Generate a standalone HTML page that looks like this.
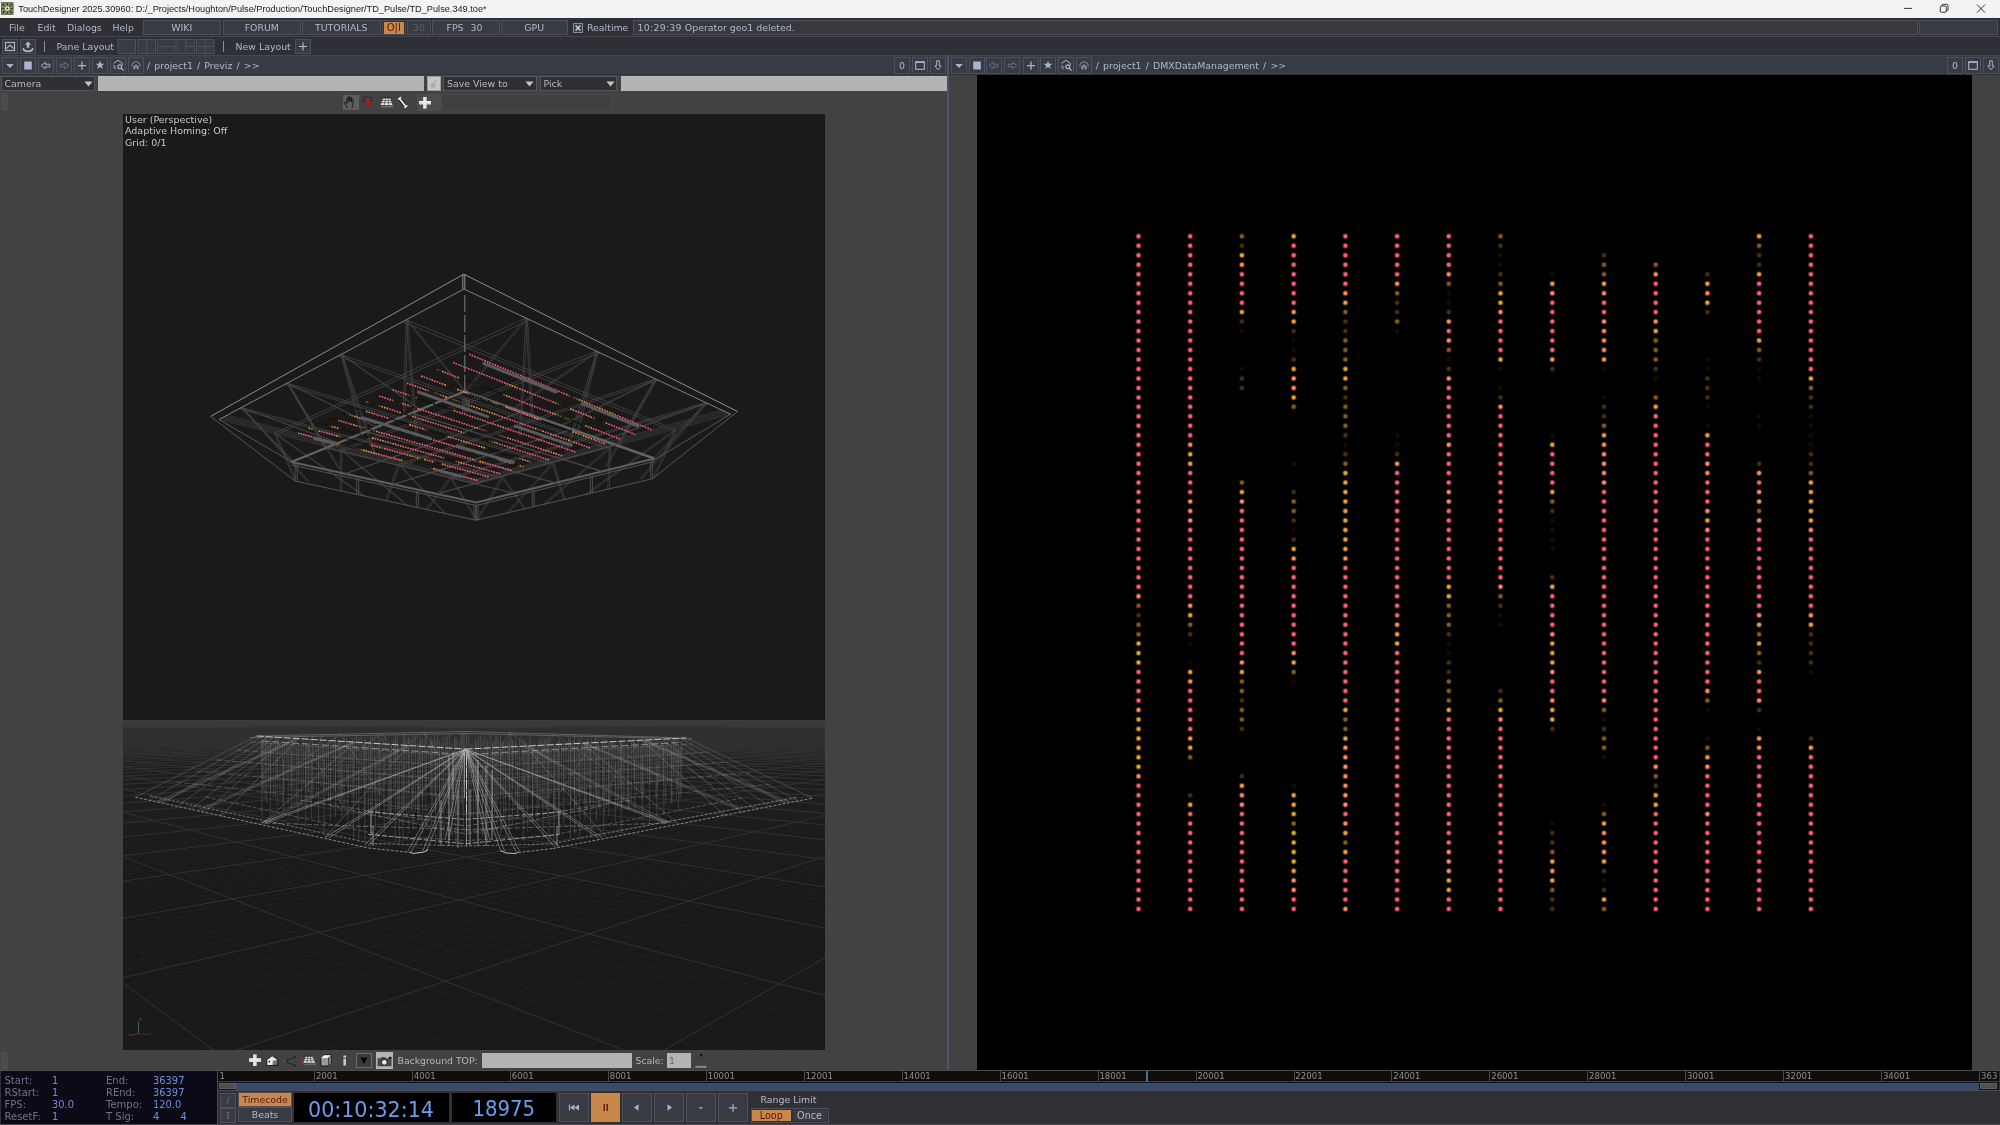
<!DOCTYPE html>
<html><head><meta charset="utf-8"><title>TouchDesigner</title>
<style>
*{box-sizing:border-box;margin:0;padding:0}
html,body{width:2000px;height:1125px;overflow:hidden;background:#424242}
body{position:relative;will-change:transform;font-family:"DejaVu Sans","Liberation Sans",sans-serif;font-size:9.4px;color:#b3b8c9}
.a{position:absolute}
.t{position:absolute;white-space:nowrap;line-height:12px;height:12px}
.b{position:absolute;background:#383b44;border:1px solid #4d5058}
.c{text-align:center}
svg{position:absolute;overflow:visible}
#title{left:0;top:0;width:2000px;height:18px;background:#f3f3f3}
#title .t{font-family:"Liberation Sans",sans-serif;font-size:9.200px;color:#1a1a1a;left:18.300px;top:3.300px}
.bar{left:0;width:2000px;height:19px;background:#2e3035;border-bottom:1px solid #44464b}
.path{top:55px;height:20px;background:#383b44;border-top:1px solid #44464b;border-bottom:1px solid #303238}
.pb{position:absolute;top:1px;width:16px;height:17px;background:#383b44;border:1px solid #4d5058}
.dd{position:absolute;top:76px;height:15px;background:#2e3035;border:1px solid #54565c;color:#b8b8b8}
.f{position:absolute;background:#b4b4b4}
.lbl{color:#6d7487}
.val{color:#6e8fd6}
.or{background:#c8874b;color:#5a1410;border-color:#c8874b}
</style></head><body>
<div id="title" class="a"><span class="t">TouchDesigner 2025.30960: D:/_Projects/Houghton/Pulse/Production/TouchDesigner/TD_Pulse/TD_Pulse.349.toe*</span><svg style="left:0;top:0" width="16" height="18" viewBox="0 0 16 18"><rect x="1.500" y="2.700" width="11.600" height="11.600" fill="#7d8d5c" stroke="#3a3f2a" stroke-width="0.700"/><path d="M3.200 4.400l2.600 2.600M11.400 4.400l-2.600 2.600M3.200 12.600l2.600-2.600M11.400 12.600l-2.600-2.600M7.300 3v2.700M7.300 11.300v2.700M1.800 8.500h2.600M10.200 8.500h2.600" stroke="#15150f" stroke-width="0.700"/><path d="M2.700 3.900h1.300v1.300H2.700zM10.600 3.900h1.300v1.300h-1.300zM2.700 11.800h1.300v1.300H2.700zM10.600 11.800h1.300v1.300h-1.300z" fill="#15150f"/><circle cx="7.300" cy="8.500" r="1.700" fill="#333" stroke="#f4f4f4" stroke-width="1.300"/></svg><svg style="left:1900px;top:0" width="100" height="18" viewBox="0 0 100 18" fill="none" stroke="#222" stroke-width="0.9"><path d="M4 8.4h8"/><rect x="40.3" y="6" width="6" height="6.3" rx="1.2"/><path d="M42 6v-0.5a1.2 1.2 0 0 1 1.2-1.2h3.6a1.2 1.2 0 0 1 1.2 1.2v4a1.2 1.2 0 0 1-1.2 1.2h-0.5"/><path d="M77 4.6l8 8M85 4.6l-8 8"/></svg></div>
<div class="a bar" style="top:18px"><span class="t" style="left:9px;top:3.500px">File</span><span class="t" style="left:37.5px;top:3.500px">Edit</span><span class="t" style="left:67px;top:3.500px">Dialogs</span><span class="t" style="left:112.5px;top:3.500px">Help</span><div class="b c" style="left:142.5px;top:2px;width:78.5px;height:15px"><span class="t" style="position:static;line-height:13px">WIKI</span></div><div class="b c" style="left:222.5px;top:2px;width:78.5px;height:15px"><span class="t" style="position:static;line-height:13px">FORUM</span></div><div class="b c" style="left:302px;top:2px;width:78.5px;height:15px"><span class="t" style="position:static;line-height:13px">TUTORIALS</span></div><div class="b" style="left:382px;top:2px;width:23.5px;height:15px;background:#2e3035"><div class="a or c" style="left:0.5px;top:0.5px;width:20.5px;height:12px;line-height:12px;font-size:10px">O|I</div></div><div class="b c" style="left:407px;top:2px;width:24px;height:15px;color:#5d6170;line-height:13px">30</div><div class="b" style="left:432px;top:2px;width:67.5px;height:15px"><span class="t" style="left:13.5px;top:0.5px">FPS</span><span class="t" style="left:37.5px;top:0.5px">30</span></div><div class="b c" style="left:500.5px;top:2px;width:67.5px;height:15px;line-height:13px">GPU</div><div class="a" style="left:573px;top:5px;width:10px;height:10px;border:1px solid #8a8d96;background:#3a3c44"></div><svg style="left:573px;top:5px" width="10" height="10" viewBox="0 0 10 10"><path d="M2.6 2.6l4.8 4.8M7.4 2.6l-4.8 4.8" stroke="#d0d3de" stroke-width="1.4"/></svg><span class="t" style="left:587px;top:3.5px">Realtime</span><div class="b" style="left:633px;top:2px;width:1285px;height:15px;background:#38393e"><span class="t" style="left:3.500px;top:0.500px"><span style="letter-spacing:0.280px">10:29:39</span> Operator geo1 deleted.</span></div><div class="b" style="left:1919px;top:2px;width:79px;height:15px"></div></div>
<div class="a bar" style="top:37px"><div class="b" style="left:2px;top:2px;width:16px;height:15px"></div><svg style="left:2px;top:2px" width="16" height="15" viewBox="0 0 16 15" fill="none" stroke="#b3b8c9" stroke-width="1.1"><rect x="3.5" y="3.5" width="9" height="8"/><path d="M4.5 9.5L8 6l3.5 3.5"/></svg><div class="b" style="left:19.5px;top:2px;width:16px;height:15px"></div><svg style="left:19.5px;top:2px" width="16" height="15" viewBox="0 0 16 15"><path d="M8 2.6l3 3.2H9.2v3H6.800V5.800H5z" fill="#b3b8c9"/><path d="M3 9.300c0.500 2.200 2.600 3 5 3s4.500-0.800 5-3" fill="none" stroke="#b3b8c9" stroke-width="1.6"/></svg><div class="a" style="left:44px;top:4px;width:1px;height:11px;background:#8a8d96"></div><span class="t" style="left:56.5px;top:3.5px">Pane Layout</span><svg style="left:117px;top:2px" width="98" height="15" viewBox="0 0 98 15" fill="#383b44" stroke="#4d5058" stroke-width="1"><rect x="1" y="0.5" width="17.5" height="14"/><rect x="21" y="0.5" width="17.5" height="14"/><path d="M29.700 0.500v14"/><rect x="40.500" y="0.500" width="17.500" height="14"/><path d="M40.500 7.500h17.500"/><rect x="60" y="0.500" width="17.500" height="14"/><path d="M68.700 0.500v14M68.700 7.500h8.800"/><rect x="79.500" y="0.500" width="17.500" height="14"/><path d="M88.200 0.500v14M79.500 7.500h17.500"/></svg><div class="a" style="left:223px;top:4px;width:1px;height:11px;background:#8a8d96"></div><span class="t" style="left:235.5px;top:3.5px">New Layout</span><div class="b" style="left:295px;top:2px;width:16px;height:15px"></div><svg style="left:295px;top:2px" width="16" height="15" viewBox="0 0 16 15"><path d="M8 3.500v8M4 7.500h8" stroke="#b3b8c9" stroke-width="1.2"/></svg></div>
<div class="a path" style="left:0px;width:947px"><div class="pb" style="left:2px"></div><svg style="left:2px;top:1px" width="16" height="17" viewBox="0 0 16 17"><path d="M4.200 7h7.600L8 11z" fill="#a9b3cf"/></svg><div class="pb" style="left:20px"></div><svg style="left:20px;top:1px" width="16" height="17" viewBox="0 0 16 17"><rect x="4.200" y="4.500" width="7.600" height="8" fill="#a9b3cf"/></svg><div class="pb" style="left:38px"></div><svg style="left:38px;top:1px" width="16" height="17" viewBox="0 0 16 17"><path d="M3.200 8.500l4-3.200v1.900h4.600v2.600H7.200v1.900z" fill="none" stroke="#a9b3cf" stroke-width="1"/></svg><div class="pb" style="left:56px"></div><svg style="left:56px;top:1px" width="16" height="17" viewBox="0 0 16 17"><path d="M12.800 8.500l-4-3.200v1.900H4.200v2.600h4.600v1.900z" fill="none" stroke="#6b7287" stroke-width="1"/></svg><div class="pb" style="left:73.5px"></div><svg style="left:73.5px;top:1px" width="16" height="17" viewBox="0 0 16 17"><path d="M8 4.500v8.200M3.900 8.600h8.200" stroke="#a9b3cf" stroke-width="1.300"/></svg><div class="pb" style="left:91.5px"></div><svg style="left:91.5px;top:1px" width="16" height="17" viewBox="0 0 16 17"><path d="M8 3.800l1.250 3h3.100l-2.500 2 0.950 3.100L8 10l-2.800 1.900 0.950-3.100-2.500-2h3.100z" fill="#a9b3cf"/></svg><div class="pb" style="left:109.5px"></div><svg style="left:109.5px;top:1px" width="16" height="17" viewBox="0 0 16 17"><path d="M3.500 6.300L8 3.300l4.300 3M3.300 8.300l2.500 1.800M3.300 10.300l2.500 1.800" fill="none" stroke="#a9b3cf" stroke-width="1"/><path d="M12.300 6.300v2" stroke="#a9b3cf" stroke-width="1"/><circle cx="9.800" cy="9.800" r="1.900" fill="none" stroke="#a9b3cf" stroke-width="1.200"/><path d="M11.200 11.200l2.300 2.300" stroke="#a9b3cf" stroke-width="1.300"/></svg><div class="pb" style="left:127.5px"></div><svg style="left:127.5px;top:1px" width="16" height="17" viewBox="0 0 16 17"><path d="M3.800 9.500c0-3 1.800-4.700 4.200-4.700s4.200 1.700 4.200 4.700" fill="none" stroke="#8a93ad" stroke-width="1"/><path d="M5.300 12.300V9.500L8 7.300l2.700 2.200v2.800z" fill="#8a93ad"/><rect x="7.400" y="9.700" width="1.200" height="2.600" fill="#383b44"/></svg><span class="t" style="left:147.0px;top:3.500px;word-spacing:1.200px">/ project1 / Previz / &gt;&gt;</span><div class="pb" style="left:894px"></div><span class="t c" style="left:894px;width:16px;top:3.5px">0</span><div class="pb" style="left:912px"></div><svg style="left:912px;top:1px" width="16" height="17" viewBox="0 0 16 17"><rect x="3.700" y="5.300" width="8.600" height="7" fill="none" stroke="#a9b3cf" stroke-width="1.100"/><path d="M3.200 5h9.600" stroke="#a9b3cf" stroke-width="1.600"/></svg><div class="pb" style="left:930px"></div><svg style="left:930px;top:1px" width="16" height="17" viewBox="0 0 16 17"><path d="M6.700 3.800h2.600v5h1.900L8 12.800 4.800 8.800h1.900z" fill="none" stroke="#a9b3cf" stroke-width="1"/></svg></div>
<div class="a path" style="left:949.2px;width:1050.8px"><div class="pb" style="left:1.5px"></div><svg style="left:1.5px;top:1px" width="16" height="17" viewBox="0 0 16 17"><path d="M4.200 7h7.600L8 11z" fill="#a9b3cf"/></svg><div class="pb" style="left:19.5px"></div><svg style="left:19.5px;top:1px" width="16" height="17" viewBox="0 0 16 17"><rect x="4.200" y="4.500" width="7.600" height="8" fill="#a9b3cf"/></svg><div class="pb" style="left:37px"></div><svg style="left:37px;top:1px" width="16" height="17" viewBox="0 0 16 17"><path d="M3.200 8.500l4-3.200v1.900h4.600v2.600H7.200v1.900z" fill="none" stroke="#6b7287" stroke-width="1"/></svg><div class="pb" style="left:55px"></div><svg style="left:55px;top:1px" width="16" height="17" viewBox="0 0 16 17"><path d="M12.800 8.500l-4-3.200v1.900H4.200v2.600h4.600v1.900z" fill="none" stroke="#6b7287" stroke-width="1"/></svg><div class="pb" style="left:73.5px"></div><svg style="left:73.5px;top:1px" width="16" height="17" viewBox="0 0 16 17"><path d="M8 4.500v8.200M3.900 8.600h8.200" stroke="#a9b3cf" stroke-width="1.300"/></svg><div class="pb" style="left:91px"></div><svg style="left:91px;top:1px" width="16" height="17" viewBox="0 0 16 17"><path d="M8 3.800l1.250 3h3.100l-2.500 2 0.950 3.100L8 10l-2.800 1.900 0.950-3.100-2.500-2h3.100z" fill="#a9b3cf"/></svg><div class="pb" style="left:109px"></div><svg style="left:109px;top:1px" width="16" height="17" viewBox="0 0 16 17"><path d="M3.500 6.300L8 3.300l4.300 3M3.300 8.300l2.500 1.800M3.300 10.300l2.500 1.800" fill="none" stroke="#a9b3cf" stroke-width="1"/><path d="M12.300 6.300v2" stroke="#a9b3cf" stroke-width="1"/><circle cx="9.800" cy="9.800" r="1.900" fill="none" stroke="#a9b3cf" stroke-width="1.200"/><path d="M11.200 11.200l2.300 2.300" stroke="#a9b3cf" stroke-width="1.300"/></svg><div class="pb" style="left:127px"></div><svg style="left:127px;top:1px" width="16" height="17" viewBox="0 0 16 17"><path d="M3.800 9.500c0-3 1.800-4.700 4.200-4.700s4.200 1.700 4.200 4.700" fill="none" stroke="#8a93ad" stroke-width="1"/><path d="M5.300 12.300V9.500L8 7.300l2.700 2.200v2.800z" fill="#8a93ad"/><rect x="7.400" y="9.700" width="1.200" height="2.600" fill="#383b44"/></svg><span class="t" style="left:146.5px;top:3.500px;word-spacing:1.200px">/ project1 / DMXDataManagement / &gt;&gt;</span><div class="pb" style="left:997.8px"></div><span class="t c" style="left:997.8px;width:16px;top:3.5px">0</span><div class="pb" style="left:1015.8px"></div><svg style="left:1015.8px;top:1px" width="16" height="17" viewBox="0 0 16 17"><rect x="3.700" y="5.300" width="8.600" height="7" fill="none" stroke="#a9b3cf" stroke-width="1.100"/><path d="M3.200 5h9.600" stroke="#a9b3cf" stroke-width="1.600"/></svg><div class="pb" style="left:1033.8px"></div><svg style="left:1033.8px;top:1px" width="16" height="17" viewBox="0 0 16 17"><path d="M6.700 3.800h2.600v5h1.900L8 12.800 4.800 8.800h1.900z" fill="none" stroke="#a9b3cf" stroke-width="1"/></svg></div>
<div class="a" style="left:947.300px;top:55px;width:1.800px;height:1015px;background:#4f5170"></div>
<div class="dd" style="left:0.500px;width:94.500px"><span class="t" style="left:3px;top:0.500px">Camera</span><svg style="left:82px;top:4px" width="9" height="6" viewBox="0 0 9 6"><path d="M0.500 0.500h8L4.500 5.500z" fill="#c4c4c4"/></svg></div><div class="f" style="left:98px;top:76px;width:326px;height:15px"></div><div class="a" style="left:426.500px;top:76px;width:14.500px;height:15px;background:#c6c6c6;border:1px solid #9a9a9a"></div><svg style="left:427px;top:76px" width="14" height="15" viewBox="0 0 14 15"><circle cx="6" cy="9.300" r="2.500" fill="#aaa"/><path d="M7 6.500a1.800 1.800 0 0 1 3.300-0.500" fill="none" stroke="#aaa" stroke-width="1.200"/></svg><div class="dd" style="left:443px;width:93.500px"><span class="t" style="left:3px;top:0.500px">Save View to</span><svg style="left:81px;top:4px" width="9" height="6" viewBox="0 0 9 6"><path d="M0.500 0.500h8L4.500 5.500z" fill="#c4c4c4"/></svg></div><div class="dd" style="left:539.5px;width:77.500px"><span class="t" style="left:3px;top:0.500px">Pick</span><svg style="left:65.500px;top:4px" width="9" height="6" viewBox="0 0 9 6"><path d="M0.500 0.500h8L4.500 5.500z" fill="#c4c4c4"/></svg></div><div class="f" style="left:621px;top:76px;width:326px;height:15px"></div><div class="a" style="left:0.500px;top:93px;width:7.500px;height:18px;background:#4c4c4c"></div><div class="a" style="left:0.500px;top:1051.500px;width:7.500px;height:18px;background:#4c4c4c"></div><div class="a" style="left:343px;top:94.700px;width:16px;height:15.600px;background:#5e5e5e"></div><div class="a" style="left:417px;top:93.500px;width:24px;height:17.500px;background:#4c4c4c"></div><div class="a" style="left:441px;top:93.500px;width:172px;height:17.500px;background:#404040;border:1px solid #484848"></div><svg style="left:338px;top:90px" width="110" height="24" viewBox="338 90 110 24" fill="none"><path d="M346.800 103.500c-0.800-1.200-1.600-1.700-2.200-1.200s0.300 1.600 1 2.800l1.900 3.200M346.800 104v-5.200c0-1.100 1.500-1.100 1.500 0v3.500M348.300 101.500v-4.200c0-1.100 1.600-1.100 1.600 0v4.300M349.900 101.500v-3.600c0-1.100 1.600-1.100 1.600 0v4M351.500 102v-2.300c0-1 1.500-1 1.500 0v4.300c0 2-0.600 3.200-1.300 4.600" stroke="#161616" stroke-width="0.900"/><path d="M363.300 97.200h8.600v4.400h-8.600z" stroke="#1c1c1c" stroke-width="0.900" stroke-dasharray="1.700 1.100"/><path d="M366.500 98.600l4.200 3.600-1.700 0.500 1.700 4.200-1.100 0.400-1.600-4.200-1.500 1.200z" fill="#f00000"/><path d="M381 105.600h12.500v1.900h-12.500z" fill="#6a6a6a"/><path d="M383.300 98.200h6.800l2.400 6.700h-11.800z" fill="#e8e8e8"/><path d="M382.400 100.500h8.600M381.600 102.700h10.200M385.500 98.200l-1.300 6.700M387.900 98.200l0.900 6.700" stroke="#333" stroke-width="0.600"/><path d="M383 97.900h7.200" stroke="#222" stroke-width="0.800"/><path d="M379.500 99.500v6h6" stroke="#f00000" stroke-width="1.100"/><path d="M399.600 98.600l6.200 8" stroke="#161616" stroke-width="3.400" stroke-linecap="round"/><path d="M399.600 98.600l6.200 8" stroke="#e4e4e4" stroke-width="1.800" stroke-linecap="round"/><circle cx="399" cy="98.900" r="1.100" fill="#e4e4e4"/><circle cx="400.300" cy="97.800" r="1.100" fill="#e4e4e4"/><circle cx="405.200" cy="107.300" r="1.100" fill="#e4e4e4"/><circle cx="406.500" cy="106.200" r="1.100" fill="#e4e4e4"/><path d="M423.400 97h3.300v4.100h4.300v3.300h-4.300v4.100h-3.300v-4.100h-4.300v-3.300h4.300z" fill="#dcdcdc"/><path d="M423.400 97h1.200v11.500h-1.200zM419.100 101.100h11.900v1.100h-11.900z" fill="#f4f4f4"/></svg>
<div class="a" style="left:123px;top:114px;width:702px;height:936px;background:#1a1a1a;overflow:hidden"><svg style="left:0;top:0" width="702" height="936" viewBox="123 114 702 936" fill="none" stroke-linecap="butt"><defs><linearGradient id="hz" x1="0" y1="0" x2="0" y2="1"><stop offset="0" stop-color="#3c3c3c"/><stop offset="0.055" stop-color="#383838"/><stop offset="0.1" stop-color="#2f2f2f"/><stop offset="0.2" stop-color="#272727"/><stop offset="0.4" stop-color="#202020"/><stop offset="0.7" stop-color="#1b1b1b"/><stop offset="1" stop-color="#191919"/></linearGradient></defs><rect x="123" y="720" width="702" height="110" fill="url(#hz)"/><rect x="123" y="830" width="702" height="220" fill="#191919"/><path d="M123 727.5h22M154 727.5h38M199 727.5h24M233 727.5h14M255 727.5h28M294 727.5h11M311 727.5h11M334 727.5h30M366 727.5h39M419 727.5h29M458 727.5h13M473 727.5h25M501 727.5h14M519 727.5h9M536 727.5h22M570 727.5h25M605 727.5h24M638 727.5h23M666 727.5h40M720 727.5h35M766 727.5h18M789 727.5h17M809 727.5h33M123 729.5h35M165 729.5h39M216 729.5h8M228 729.5h37M273 729.5h39M319 729.5h10M339 729.5h33M377 729.5h11M394 729.5h39M444 729.5h12M460 729.5h11M474 729.5h34M512 729.5h26M545 729.5h14M570 729.5h12M592 729.5h12M611 729.5h15M631 729.5h39M682 729.5h18M712 729.5h15M734 729.5h35M779 729.5h11M804 729.5h15M824 729.5h33M123 731.6h17M143 731.6h11M163 731.6h16M188 731.6h20M216 731.6h39M262 731.6h26M301 731.6h14M319 731.6h37M367 731.6h16M388 731.6h32M433 731.6h14M460 731.6h36M506 731.6h21M531 731.6h9M553 731.6h16M579 731.6h16M608 731.6h27M640 731.6h14M664 731.6h10M679 731.6h26M717 731.6h28M750 731.6h37M792 731.6h9M806 731.6h22M123 733.9h14M143 733.9h26M173 733.9h20M205 733.9h39M254 733.9h30M294 733.9h12M309 733.9h9M330 733.9h30M374 733.9h9M392 733.9h23M427 733.9h18M459 733.9h10M478 733.9h32M522 733.9h32M564 733.9h33M610 733.9h19M640 733.9h37M689 733.9h21M722 733.9h36M767 733.9h28M801 733.9h27M123 736.4h11M143 736.4h40M196 736.4h31M234 736.4h32M274 736.4h22M308 736.4h11M330 736.4h9M348 736.4h23M376 736.4h30M415 736.4h28M455 736.4h16M474 736.4h18M501 736.4h14M520 736.4h37M567 736.4h22M602 736.4h18M630 736.4h14M652 736.4h34M698 736.4h36M741 736.4h27M774 736.4h12M794 736.4h35M123 739.0h31M167 739.0h17M188 739.0h22M216 739.0h15M238 739.0h28M274 739.0h18M304 739.0h39M351 739.0h10M363 739.0h36M402 739.0h31M441 739.0h18M471 739.0h9M483 739.0h23M508 739.0h35M547 739.0h13M562 739.0h28M598 739.0h28M636 739.0h34M683 739.0h30M717 739.0h23M745 739.0h8M761 739.0h31M796 739.0h17M819 739.0h30M123 741.8h28M162 741.8h21M194 741.8h37M234 741.8h38M282 741.8h12M302 741.8h28M343 741.8h20M372 741.8h36M420 741.8h38M465 741.8h29M499 741.8h31M542 741.8h29M581 741.8h15M608 741.8h39M661 741.8h25M698 741.8h18M729 741.8h35M771 741.8h11M789 741.8h26M123 744.8h24M149 744.8h34M186 744.8h34M223 744.8h19M253 744.8h12M270 744.8h25M305 744.8h35M350 744.8h38M396 744.8h38M438 744.8h15M461 744.8h17M489 744.8h28M526 744.8h35M570 744.8h18M594 744.8h35M642 744.8h15M669 744.8h39M716 744.8h26M747 744.8h25M780 744.8h27M810 744.8h39M123 748.0h21M155 748.0h26M189 748.0h30M222 748.0h25M254 748.0h39M306 748.0h17M330 748.0h12M350 748.0h34M397 748.0h23M426 748.0h14M449 748.0h38M490 748.0h33M526 748.0h14M545 748.0h30M580 748.0h19M609 748.0h11M631 748.0h12M651 748.0h16M672 748.0h25M704 748.0h20M731 748.0h25M760 748.0h15M784 748.0h28M821 748.0h35M123 751.5h35M163 751.5h32M207 751.5h37M249 751.5h18M280 751.5h15M309 751.5h36M349 751.5h16M376 751.5h16M395 751.5h35M437 751.5h33M474 751.5h21M505 751.5h9M518 751.5h30M561 751.5h39M603 751.5h24M638 751.5h24M673 751.5h14M689 751.5h11M703 751.5h26M737 751.5h26M767 751.5h14M785 751.5h35M123 755.1h38M164 755.1h10M187 755.1h23M221 755.1h18M247 755.1h24M279 755.1h27M308 755.1h30M351 755.1h14M372 755.1h32M411 755.1h14M429 755.1h24M455 755.1h37M504 755.1h31M546 755.1h28M581 755.1h27M617 755.1h39M668 755.1h16M697 755.1h32M740 755.1h34M781 755.1h37M123 759.1h30M164 759.1h32M204 759.1h31M238 759.1h19M264 759.1h8M279 759.1h28M317 759.1h15M346 759.1h29M381 759.1h29M419 759.1h25M451 759.1h40M500 759.1h30M542 759.1h39M584 759.1h28M622 759.1h16M645 759.1h10M659 759.1h20M682 759.1h16M711 759.1h26M745 759.1h39M793 759.1h40M123 763.3h34M160 763.3h27M198 763.3h9M221 763.3h13M241 763.3h13M263 763.3h28M293 763.3h38M338 763.3h25M372 763.3h20M398 763.3h29M435 763.3h17M463 763.3h17M483 763.3h16M501 763.3h13M525 763.3h20M558 763.3h32M593 763.3h40M646 763.3h10M669 763.3h22M698 763.3h39M742 763.3h25M780 763.3h31M819 763.3h39M123 767.8h27M154 767.8h28M189 767.8h15M206 767.8h25M235 767.8h22M267 767.8h23M295 767.8h27M328 767.8h33M370 767.8h40M423 767.8h31M459 767.8h12M484 767.8h33M526 767.8h19M551 767.8h30M590 767.8h27M626 767.8h32M663 767.8h16M692 767.8h37M742 767.8h9M754 767.8h17M778 767.8h28M809 767.8h25M123 772.6h11M144 772.6h26M179 772.6h20M207 772.6h15M228 772.6h32M272 772.6h10M285 772.6h34M329 772.6h33M366 772.6h22M393 772.6h34M433 772.6h29M476 772.6h18M503 772.6h32M548 772.6h22M576 772.6h11M599 772.6h11M613 772.6h26M647 772.6h30M682 772.6h33M718 772.6h15M743 772.6h11M759 772.6h31M801 772.6h17M821 772.6h19M123 777.8h20M146 777.8h31M186 777.8h37M236 777.8h37M281 777.8h34M320 777.8h18M345 777.8h38M396 777.8h16M418 777.8h20M444 777.8h21M471 777.8h14M494 777.8h34M536 777.8h35M580 777.8h14M605 777.8h36M646 777.8h9M663 777.8h25M697 777.8h39M746 777.8h34M783 777.8h25M820 777.8h11M123 783.3h32M167 783.3h11M188 783.3h13M211 783.3h29M245 783.3h15M271 783.3h25M307 783.3h21M334 783.3h39M383 783.3h24M415 783.3h31M457 783.3h37M501 783.3h34M545 783.3h35M592 783.3h35M640 783.3h39M688 783.3h25M723 783.3h34M764 783.3h21M789 783.3h32M123 789.2h20M147 789.2h15M169 789.2h17M200 789.2h10M215 789.2h12M237 789.2h33M274 789.2h10M291 789.2h27M331 789.2h9M343 789.2h14M362 789.2h16M388 789.2h27M420 789.2h14M439 789.2h14M464 789.2h18M490 789.2h34M532 789.2h16M561 789.2h37M604 789.2h26M643 789.2h23M671 789.2h10M694 789.2h34M735 789.2h25M768 789.2h17M798 789.2h29M123 795.5h8M139 795.5h20M170 795.5h31M211 795.5h13M227 795.5h18M251 795.5h36M295 795.5h28M337 795.5h17M362 795.5h13M386 795.5h8M406 795.5h35M453 795.5h11M469 795.5h31M503 795.5h23M534 795.5h39M582 795.5h35M623 795.5h33M663 795.5h37M703 795.5h34M742 795.5h25M776 795.5h13M801 795.5h18M825 795.5h10" stroke="#363636" stroke-opacity="0.55" stroke-width="1"/><path d="M789.6 1052.0L827.0 1024.3M746.6 1052.0L827.0 997.8M703.6 1052.0L827.0 975.4M617.7 1052.0L827.0 940.1M574.7 1052.0L827.0 925.8M531.8 1052.0L827.0 913.3M488.8 1052.0L827.0 902.2M445.8 1052.0L827.0 892.3M402.9 1052.0L827.0 883.5M359.9 1052.0L827.0 875.5M316.9 1052.0L827.0 868.2M274.0 1052.0L827.0 861.6M188.0 1052.0L827.0 850.0M145.0 1052.0L827.0 844.9M121.0 1046.5L827.0 840.2M121.0 1034.6L827.0 835.8M121.0 1023.5L827.0 831.7M121.0 1013.2L827.0 827.9M121.0 1003.6L827.0 824.3M121.0 994.5L827.0 821.0M121.0 986.1L827.0 817.9M121.0 970.6L827.0 812.2M121.0 963.6L827.0 809.6M121.0 956.9L827.0 807.1M121.0 950.5L827.0 804.8M121.0 944.5L827.0 802.6M121.0 938.8L827.0 800.5M121.0 933.4L827.0 798.5M121.0 928.3L827.0 796.6M121.0 923.4L827.0 794.8M121.0 914.2L827.0 791.4M121.0 909.9L827.0 789.8M121.0 905.8L827.0 788.3M121.0 901.9L827.0 786.9M121.0 898.1L827.0 785.5M121.0 894.5L827.0 784.2M121.0 891.1L827.0 782.9M121.0 887.7L827.0 781.7M121.0 884.5L827.0 780.5M121.0 878.5L827.0 778.2M121.0 875.6L827.0 777.2M121.0 872.9L827.0 776.2M121.0 870.2L827.0 775.2M121.0 867.6L827.0 774.2M121.0 865.1L827.0 773.3M121.0 862.7L827.0 772.4M121.0 860.4L827.0 771.6M121.0 858.2L827.0 770.8M121.0 853.9L827.0 769.2M121.0 851.8L827.0 768.4M121.0 849.8L827.0 767.7M121.0 847.9L827.0 767.0M121.0 846.0L827.0 766.3M121.0 844.2L827.0 765.6M121.0 842.4L827.0 765.0M121.0 840.7L827.0 764.3M121.0 839.1L827.0 763.7M121.0 835.8L827.0 762.5M121.0 834.3L827.0 762.0M121.0 832.8L827.0 761.4M121.0 831.4L827.0 760.9M121.0 829.9L827.0 760.3M121.0 828.5L827.0 759.8M121.0 827.2L827.0 759.3M121.0 825.9L827.0 758.9M121.0 824.6L827.0 758.4M121.0 822.1L827.0 757.5M121.0 820.9L827.0 757.0M121.0 819.7L827.0 756.6M121.0 818.6L827.0 756.2M121.0 817.5L827.0 755.8M121.0 816.4L827.0 755.4M121.0 815.3L827.0 755.0M121.0 814.3L827.0 754.6M121.0 813.2L827.0 754.2M121.0 811.3L827.0 753.5M121.0 810.3L827.0 753.1M121.0 809.4L827.0 752.8M121.0 808.4L827.0 752.4M121.0 807.5L827.0 752.1M121.0 806.7L827.0 751.8M121.0 805.8L827.0 751.5M121.0 804.9L827.0 751.1M121.0 804.1L827.0 750.8M121.0 802.5L827.0 750.2M121.0 801.7L827.0 749.9M121.0 800.9L827.0 749.7M121.0 800.2L827.0 749.4M121.0 799.4L827.0 749.1M121.0 798.7L827.0 748.8M121.0 798.0L827.0 748.6M121.0 797.3L827.0 748.3M121.0 796.6L827.0 748.1M121.0 795.3L827.0 747.6M121.0 794.6L827.0 747.3M121.0 794.0L827.0 747.1M121.0 793.3L827.0 746.9M121.0 792.7L827.0 746.6M121.0 792.1L827.0 746.4M121.0 791.5L827.0 746.2M121.0 790.9L827.0 746.0M121.0 790.3L827.0 745.8M133.4 1052.0L121.0 1040.8M174.6 1052.0L121.0 1008.2M257.2 1052.0L121.0 959.5M298.5 1052.0L121.0 940.9M339.7 1052.0L121.0 924.9M381.0 1052.0L121.0 911.1M422.3 1052.0L121.0 899.0M463.6 1052.0L121.0 888.4M504.8 1052.0L121.0 878.9M546.1 1052.0L121.0 870.5M587.4 1052.0L121.0 862.9M669.9 1052.0L121.0 849.8M711.2 1052.0L121.0 844.1M752.5 1052.0L121.0 838.9M793.8 1052.0L121.0 834.1M827.0 1049.5L121.0 829.7M827.0 1037.2L121.0 825.6M827.0 1025.8L121.0 821.8M827.0 1015.2L121.0 818.2M827.0 1005.3L121.0 814.9M827.0 987.4L121.0 809.0M827.0 979.2L121.0 806.2M827.0 971.6L121.0 803.7M827.0 964.3L121.0 801.3M827.0 957.5L121.0 799.0M827.0 951.1L121.0 796.9M827.0 945.0L121.0 794.8M827.0 939.2L121.0 792.9M827.0 933.7L121.0 791.0M827.0 923.4L121.0 787.6M827.0 918.7L121.0 786.1M827.0 914.1L121.0 784.5M827.0 909.8L121.0 783.1M827.0 905.7L121.0 781.7M827.0 901.7L121.0 780.4M827.0 897.9L121.0 779.1M827.0 894.2L121.0 777.9M827.0 890.7L121.0 776.7M827.0 884.1L121.0 774.5M827.0 881.0L121.0 773.5M827.0 878.0L121.0 772.5M827.0 875.2L121.0 771.5M827.0 872.4L121.0 770.6M827.0 869.7L121.0 769.7M827.0 867.1L121.0 768.9M827.0 864.6L121.0 768.0M827.0 862.2L121.0 767.2M827.0 857.6L121.0 765.7M827.0 855.4L121.0 765.0M827.0 853.2L121.0 764.2M827.0 851.2L121.0 763.6M827.0 849.2L121.0 762.9M827.0 847.3L121.0 762.2M827.0 845.4L121.0 761.6M827.0 843.6L121.0 761.0M827.0 841.8L121.0 760.4M827.0 838.4L121.0 759.3M827.0 836.8L121.0 758.7M827.0 835.2L121.0 758.2M827.0 833.6L121.0 757.7M827.0 832.1L121.0 757.2M827.0 830.7L121.0 756.7M827.0 829.2L121.0 756.2M827.0 827.8L121.0 755.8M827.0 826.5L121.0 755.3M827.0 823.9L121.0 754.5M827.0 822.6L121.0 754.0M827.0 821.4L121.0 753.6M827.0 820.2L121.0 753.2M827.0 819.0L121.0 752.8M827.0 817.9L121.0 752.5M827.0 816.8L121.0 752.1M827.0 815.7L121.0 751.7M827.0 814.6L121.0 751.4M827.0 812.5L121.0 750.7M827.0 811.5L121.0 750.3M827.0 810.6L121.0 750.0M827.0 809.6L121.0 749.7M827.0 808.7L121.0 749.4M827.0 807.8L121.0 749.1M827.0 806.9L121.0 748.8M827.0 806.0L121.0 748.5M827.0 805.1L121.0 748.2M827.0 803.4L121.0 747.6M827.0 802.6L121.0 747.4M827.0 801.8L121.0 747.1M827.0 801.0L121.0 746.8M827.0 800.3L121.0 746.6M827.0 799.5L121.0 746.3M827.0 798.8L121.0 746.1M827.0 798.1L121.0 745.8M827.0 797.3L121.0 745.6M827.0 796.0L121.0 745.1M827.0 795.3L121.0 744.9M827.0 794.6L121.0 744.7M827.0 794.0L121.0 744.5M827.0 793.3L121.0 744.3M827.0 792.7L121.0 744.1M827.0 792.1L121.0 743.8M827.0 791.5L121.0 743.6M827.0 790.9L121.0 743.4" stroke="#1f1f1f" stroke-width="1"/><path d="M660.7 1052.0L827.0 956.5M231.0 1052.0L827.0 855.6M121.0 978.1L827.0 815.0M121.0 918.7L827.0 793.1M121.0 881.5L827.0 779.3M121.0 856.0L827.0 769.9M121.0 837.4L827.0 763.1M121.0 823.3L827.0 757.9M121.0 812.2L827.0 753.8M121.0 803.3L827.0 750.5M121.0 795.9L827.0 747.8M121.0 789.8L827.0 745.5M121.0 784.5L827.0 743.6M121.0 780.0L827.0 741.9M121.0 776.1L827.0 740.5M121.0 772.6L827.0 739.2M121.0 769.6L827.0 738.1M121.0 766.9L827.0 737.1M121.0 764.4L827.0 736.2M121.0 762.2L827.0 735.4M121.0 760.2L827.0 734.7M121.0 758.4L827.0 734.0M121.0 756.8L827.0 733.4M121.0 755.2L827.0 732.8M121.0 753.8L827.0 732.3M121.0 752.5L827.0 731.8M121.0 751.3L827.0 731.4M121.0 750.2L827.0 731.0M121.0 749.2L827.0 730.6M121.0 748.2L827.0 730.2M121.0 747.3L827.0 729.9M121.0 746.5L827.0 729.6M121.0 745.7L827.0 729.3M121.0 744.9L827.0 729.0M121.0 744.2L822.3 728.8M121.0 743.5L814.0 728.8M121.0 742.9L805.7 728.7M121.0 742.3L797.6 728.6M121.0 741.7L789.6 728.6M121.0 741.2L781.7 728.5M121.0 740.6L774.0 728.4M121.0 740.1L766.3 728.4M121.0 739.7L758.8 728.3M121.0 739.2L751.4 728.2M121.0 738.8L744.1 728.2M121.0 738.4L736.9 728.1M121.0 738.0L729.8 728.0M121.0 737.6L722.8 728.0M121.0 737.3L716.0 727.9M121.0 736.9L709.2 727.9M121.0 736.6L702.5 727.8M121.0 736.2L695.9 727.8M121.0 735.9L689.4 727.7M121.0 735.6L683.0 727.6M121.0 735.4L676.7 727.6M121.0 735.1L670.4 727.5M121.0 734.8L664.3 727.5M121.0 734.5L658.2 727.4M121.0 734.3L652.2 727.4M121.0 734.1L646.3 727.3M121.0 733.8L640.5 727.3M121.0 733.6L634.8 727.2M121.0 733.4L629.1 727.2M215.9 1052.0L121.0 981.6M628.7 1052.0L121.0 856.0M827.0 996.1L121.0 811.9M827.0 928.4L121.0 789.3M827.0 887.4L121.0 775.6M827.0 859.8L121.0 766.4M827.0 840.1L121.0 759.8M827.0 825.2L121.0 754.9M827.0 813.6L121.0 751.0M827.0 804.3L121.0 747.9M827.0 796.6L121.0 745.4M827.0 790.3L121.0 743.2M827.0 784.9L121.0 741.5M827.0 780.3L121.0 739.9M827.0 776.2L121.0 738.6M827.0 772.7L121.0 737.4M827.0 769.6L121.0 736.4M827.0 766.9L121.0 735.4M827.0 764.4L121.0 734.6M827.0 762.2L121.0 733.9M827.0 760.2L121.0 733.2M827.0 758.3L121.0 732.6M827.0 756.7L121.0 732.0M827.0 755.1L121.0 731.5M827.0 753.7L121.0 731.1M827.0 752.4L121.0 730.6M827.0 751.2L121.0 730.2M827.0 750.1L121.0 729.8M827.0 749.0L121.0 729.5M827.0 748.1L121.0 729.2M827.0 747.2L124.5 729.0M827.0 746.3L133.1 728.9M827.0 745.5L141.6 728.8M827.0 744.7L150.0 728.8M827.0 744.0L158.2 728.7M827.0 743.4L166.3 728.6M827.0 742.7L174.3 728.6M827.0 742.1L182.2 728.5M827.0 741.5L189.9 728.4M827.0 741.0L197.6 728.4M827.0 740.5L205.1 728.3M827.0 740.0L212.5 728.2M827.0 739.5L219.9 728.2M827.0 739.1L227.1 728.1M827.0 738.6L234.2 728.1M827.0 738.2L241.2 728.0M827.0 737.8L248.1 727.9M827.0 737.5L254.9 727.9M827.0 737.1L261.7 727.8M827.0 736.8L268.3 727.8M827.0 736.4L274.9 727.7M827.0 736.1L281.3 727.7M827.0 735.8L287.7 727.6M827.0 735.5L294.0 727.6M827.0 735.2L300.2 727.5M827.0 734.9L306.3 727.5M827.0 734.7L312.4 727.4M827.0 734.4L318.3 727.4M827.0 734.2L324.2 727.3M827.0 733.9L330.0 727.3M827.0 733.7L335.8 727.2M827.0 733.5L341.5 727.2M827.0 733.2L347.1 727.1" stroke="#313131" stroke-width="1"/><path d="M262.0 738.4V790.4M263.8 742.3V792.8M265.2 736.0V798.7M266.8 738.3V803.2M268.7 744.8V789.4M270.8 737.3V794.0M273.3 741.4V797.3M275.4 736.3V798.0M277.5 738.9V778.1M279.9 740.8V797.6M282.4 743.5V803.6M284.2 744.5V790.4M286.7 745.4V780.8M288.2 737.8V805.7M290.1 742.5V787.0M292.0 739.7V788.6M294.1 742.0V804.9M296.3 746.0V803.8M298.9 743.0V783.9M301.3 746.4V806.0M303.3 743.5V785.7M305.7 741.8V788.2M307.1 745.1V809.4M308.5 744.5V792.2M310.0 738.4V803.2M312.4 735.3V798.9M313.8 743.5V790.4M316.2 746.7V796.0M318.8 738.5V783.2M320.9 735.0V787.1M322.7 742.2V786.0M324.1 745.4V791.0M326.6 745.7V793.3M328.5 741.0V801.9M330.6 741.5V801.4M333.1 740.8V795.7M335.4 737.3V791.8M337.9 741.0V800.1M339.3 739.6V801.3M340.6 742.2V803.1M342.0 742.3V797.9M344.1 738.7V806.0M346.4 734.4V785.2M348.6 746.7V791.6M350.5 741.8V794.1M352.2 738.1V795.9M354.3 737.9V796.4M356.6 734.2V803.1M358.9 738.0V791.7M361.2 737.0V790.8M363.1 743.2V788.1M364.8 738.2V813.2M366.7 745.3V790.7M368.4 742.5V815.4M370.3 736.6V789.2M372.3 736.1V812.7M374.7 736.0V794.6M377.0 742.2V812.7M378.8 735.2V795.0M381.1 737.1V796.8M383.0 739.1V799.0M385.4 735.4V785.0M388.0 745.3V818.8M389.8 746.2V816.8M391.4 743.4V813.6M393.6 740.2V794.7M395.3 736.2V787.1M397.4 736.9V812.7M398.8 745.4V808.7M401.3 745.3V815.8M403.3 733.0V810.4M404.8 737.0V807.6M406.8 738.5V817.1M408.9 737.4V793.3M411.3 739.3V811.6M413.1 735.4V803.1M415.4 735.0V811.9M417.9 743.7V813.0M419.3 741.2V814.4M420.6 736.2V793.8M422.6 738.3V800.8M424.9 732.4V786.3M426.4 734.1V786.8M428.9 744.2V787.4M430.9 736.6V795.3M432.7 741.2V804.7M434.4 734.8V795.7M435.9 739.9V809.2M437.7 733.2V790.5M439.5 740.5V811.5M441.3 743.2V805.9M443.1 737.2V801.5M445.3 737.8V808.3M447.2 735.3V802.8M449.4 732.9V798.9M451.3 744.1V816.7M453.1 744.3V811.7M454.7 738.2V788.4M457.1 740.9V815.0M459.4 741.0V809.6M461.4 733.0V804.5M462.7 733.6V811.0M464.1 732.8V787.4M466.5 734.0V784.8M468.9 733.3V813.4M471.1 743.3V817.3M473.2 742.9V785.3M475.5 738.9V809.0M476.9 742.3V816.7M478.3 736.4V803.8M480.7 735.3V790.4M482.3 740.6V810.4M484.1 737.1V798.0M485.9 737.9V787.1M487.8 745.7V798.6M490.1 734.4V808.3M492.4 741.6V802.3M494.3 741.3V815.5M495.8 733.7V810.4M498.3 739.6V799.8M500.5 735.1V793.7M502.1 740.7V795.4M503.7 742.2V817.5M505.4 742.4V798.9M507.8 740.8V793.8M509.3 733.1V801.2M511.1 735.2V797.1M512.9 743.6V789.6M515.5 739.6V805.4M517.4 744.5V813.1M519.4 739.7V809.6M521.8 738.7V810.1M524.3 739.7V792.8M526.0 743.2V808.1M528.5 745.1V793.3M530.0 736.9V791.4M532.3 745.3V815.9M533.9 745.4V795.8M535.7 743.6V788.0M537.2 745.1V795.1M538.9 741.6V808.3M540.2 738.3V800.1M542.2 736.6V805.2M544.7 739.2V803.8M546.2 737.6V808.0M547.6 746.1V816.4M549.0 746.8V798.1M551.3 744.4V795.4M553.5 743.1V813.2M555.2 744.5V818.3M557.3 741.5V789.1M559.3 739.0V809.5M561.5 742.0V791.1M563.6 742.9V790.9M566.1 743.2V788.8M568.6 736.4V795.5M570.8 742.5V802.7M573.0 740.7V794.5M574.5 735.6V807.6M576.8 741.9V808.1M578.5 738.3V796.3M581.0 735.4V800.0M582.6 744.9V794.9M584.3 740.2V800.8M586.6 739.6V810.4M588.1 738.6V786.3M589.5 745.1V806.2M591.1 737.6V796.1M593.3 745.6V806.4M595.4 737.2V795.1M596.9 742.0V800.3M598.5 738.5V806.8M599.8 745.5V810.1M602.4 740.3V799.2M604.4 743.4V812.1M606.6 739.3V808.2M608.6 743.1V803.9M609.9 745.2V801.7M611.8 742.2V795.4M613.3 742.3V782.4M615.3 743.7V794.5M617.3 747.5V807.8M618.8 745.5V799.6M620.2 740.4V787.8M621.6 742.5V808.4M623.3 746.5V801.2M624.8 746.3V798.2M627.3 744.7V802.0M629.0 745.8V807.4M631.4 741.5V802.0M633.4 737.7V781.1M634.8 738.8V784.4M636.7 744.6V795.1M638.6 744.0V788.2M640.5 745.3V790.8M642.0 746.9V799.7M643.8 740.9V794.1M645.9 739.3V779.1M647.4 745.6V782.9M649.3 739.1V784.6M650.9 741.4V783.3M652.2 738.2V783.2M654.1 737.7V779.0M656.0 741.6V797.6M657.4 741.6V789.0M658.7 747.7V784.0M660.1 742.4V782.4M662.2 741.0V781.2M663.6 745.2V785.1M665.9 742.4V802.5M667.6 740.1V784.5M670.0 744.2V786.4M671.4 744.8V802.7M673.5 737.7V777.8M674.9 739.5V777.9M676.3 744.5V800.3M677.8 747.9V789.1M680.2 747.3V800.8M681.5 741.0V792.1" stroke="#a0a0a0" stroke-opacity="0.30" stroke-width="0.8"/><path d="M262.0 740.1V816.6M270.3 740.7V816.2M277.2 755.6V805.6M283.6 757.4V811.0M291.5 752.5V808.0M298.1 748.8V825.3M305.6 750.7V825.9M311.4 757.7V818.9M318.5 748.1V823.1M324.1 757.8V835.8M330.3 759.5V820.6M335.5 743.6V817.2M342.0 763.6V817.6M347.9 764.4V822.2M353.4 747.8V840.8M358.9 766.8V841.1M364.8 739.3V843.0M370.8 743.5V844.7M375.4 756.8V829.8M379.5 743.0V819.2M384.2 753.9V834.4M390.1 755.2V824.1M395.3 741.3V841.1M399.3 762.4V842.9M403.1 767.1V840.5M409.0 737.6V833.1M413.0 762.4V828.9M418.1 760.0V821.7M422.4 754.6V833.6M425.9 762.3V829.4M431.2 741.2V830.9M435.5 758.6V843.8M439.4 750.3V844.0M443.8 758.7V834.2M448.3 754.3V840.0M452.0 767.3V836.6M455.8 736.6V839.9M458.9 765.0V825.6M463.7 766.8V828.8M468.6 751.6V834.2M473.5 764.1V819.3M477.4 759.9V834.6M482.6 764.9V837.8M487.7 740.3V843.3M492.4 744.1V831.5M497.0 735.8V825.2M500.7 749.0V836.4M505.7 759.6V838.0M509.2 744.8V834.6M512.7 740.0V824.8M517.8 767.5V818.8M523.4 747.6V841.5M527.7 750.7V831.4M532.7 747.4V822.4M537.1 750.9V821.5M543.0 745.6V839.3M548.9 736.3V842.4M554.2 753.8V841.7M558.4 742.9V824.5M563.8 768.1V823.2M570.5 737.7V838.2M574.9 750.4V833.4M579.6 754.0V838.9M584.9 744.7V819.6M590.6 745.2V838.1M596.4 756.3V821.1M603.6 761.6V830.6M608.9 760.0V816.3M615.3 762.0V821.1M621.2 742.9V832.9M628.1 763.5V810.7M634.8 756.9V809.3M642.4 755.1V819.8M649.4 743.5V823.8M656.9 765.1V814.4M663.9 748.4V815.3M672.0 751.0V803.3M678.6 747.6V811.4" stroke="#a8a8a8" stroke-opacity="0.28" stroke-width="0.8"/><path d="M250 742L466 756L692 744M236 750L466 767L708 752M216 760L466 781L728 762M196 771L466 797L750 773M176 782L466 814L772 784" stroke="#909090" stroke-opacity="0.36" stroke-width="1" stroke-dasharray="6 2"/><path d="M256.8 736.0L135.3 797.2M686.0 738.0L812.8 798.1M262.8 736.3L149.3 800.2M680.0 738.3L798.8 801.1M268.8 736.6L163.3 803.2M674.0 738.6L784.8 804.1M274.8 736.9L177.3 806.2M668.0 738.9L770.8 807.1M280.8 737.2L191.3 809.2M662.0 739.2L756.8 810.1M286.8 737.5L205.3 812.2M656.0 739.5L742.8 813.1" stroke="#808080" stroke-opacity="0.42" stroke-width="0.9"/><path d="M298.6 735.1L228.6 783.1M298.6 735.1L338.6 795.1M642.0 736.7L712.0 784.7M642.0 736.7L602.0 796.7M340.5 734.2L270.5 782.2M340.5 734.2L380.5 794.2M598.0 735.4L668.0 783.4M598.0 735.4L558.0 795.4M382.3 733.3L312.3 781.3M382.3 733.3L422.3 793.3M554.0 734.1L624.0 782.1M554.0 734.1L514.0 794.1M424.2 732.4L354.2 780.4M424.2 732.4L464.2 792.4M510.0 732.8L580.0 780.8M510.0 732.8L470.0 792.8" stroke="#8a8a8a" stroke-opacity="0.3" stroke-width="0.9"/><path d="M525.1 746.1L666.2 823.1M527.1 746.1L669.2 822.3M525.1 746.1L606.2 837.1M582.4 743.2L737.5 809.2M584.4 743.2L740.5 808.4M582.4 743.2L677.5 823.2M641.9 740.2L786.2 802.5M643.9 740.2L789.2 801.7M641.9 740.2L726.2 816.5M409.2 745.6L265.0 823.1M407.2 745.6L262.0 822.3M409.2 745.6L325.0 837.1M354.9 742.2L201.2 810.7M352.9 742.2L198.2 809.9M354.9 742.2L261.2 824.7M298.6 738.6L160.0 802.5M296.6 738.6L157.0 801.7M298.6 738.6L220.0 816.5" stroke="#a0a0a0" stroke-opacity="0.45" stroke-width="0.8"/><path d="M465.6 749.1L265.0 823.1M464.1 750.1L261.5 822.5M465.6 749.1L328.7 838.1M464.1 750.1L325.2 837.5M465.6 749.1L368.1 845.6M464.1 750.1L364.6 845.0M465.6 749.1L411.2 852.0M464.1 750.1L407.7 851.4M465.6 749.1L426.2 852.0M464.1 750.1L422.7 851.4M465.6 749.1L448.7 840.0M464.1 750.1L445.2 839.4M465.6 749.1L666.2 823.1M467.1 750.1L669.7 822.5M465.6 749.1L598.7 838.1M467.1 750.1L602.2 837.5M465.6 749.1L555.6 847.5M467.1 750.1L559.1 846.9M465.6 749.1L516.2 852.0M467.1 750.1L519.7 851.4M465.6 749.1L501.2 852.0M467.1 750.1L504.7 851.4M465.6 749.1L486.2 840.0M467.1 750.1L489.7 839.4" stroke="#c4c4c4" stroke-opacity="0.55" stroke-width="0.8"/><path d="M449 756V846M453 752V800M458 790V848M464.5 752V798M466.5 752V846M470 790V846M478 760V846M486 766V846M492 770V840M441 800V846M371 812V834M373 826V846M559 812V834M557 826V846" stroke="#d4d4d4" stroke-opacity="0.7" stroke-width="0.8"/><path d="M466.500 756V812" stroke="#e0e0e0" stroke-opacity="0.8" stroke-width="0.9" stroke-dasharray="9 3"/><path d="M368.1 811.9L465.6 819.4M465.6 819.4L561.2 811.9M368.1 834.4L465.6 843.7M465.6 843.7L559.4 834.4" stroke="#c0c0c0" stroke-opacity="0.7" stroke-width="1" stroke-dasharray="5 2"/><path d="M265.0 823.1L465.6 829.5M465.6 829.5L666.2 823.1M300 800L466 826L632 800M330 806L466 834L602 806" stroke="#a8a8a8" stroke-opacity="0.45" stroke-width="1" stroke-dasharray="5 2"/><path d="M256.8 736.0L465.6 749.1M465.6 749.1L686.0 738.0" stroke="#c8c8c8" stroke-width="1" stroke-dasharray="7 2"/><path d="M262 741L465.600 754.500L680 742.500" stroke="#b0b0b0" stroke-width="1" stroke-dasharray="7 3" stroke-opacity="0.7"/><path d="M256.8 736.0L466.0 731.5M466.0 731.5L686.0 738.0M250 737.500L466 733.500L692 739" stroke="#9a9a9a" stroke-opacity="0.5" stroke-width="0.9"/><path d="M135.3 797.2L368.4 848.0M552.7 848.6L812.8 798.1M368.400 848L410 852.500M518 852.500L552.700 848.600" stroke="#a4a4a4" stroke-opacity="0.85" stroke-width="0.9" stroke-dasharray="3 1.500"/><path d="M150 796L372 843.500L466 846L550 844L798 797" stroke="#a0a0a0" stroke-opacity="0.7" stroke-width="0.9" stroke-dasharray="3 1.500"/><path d="M206 797L385 836L466 840.500L545 836.500L742 798" stroke="#a0a0a0" stroke-opacity="0.45" stroke-width="0.9" stroke-dasharray="4 2"/><path d="M409.700 851.900L413 853.500L424 852L428 849.700M501 850.800L506 853L516 853.500L518.300 851.900" stroke="#d0d0d0" stroke-width="0.9"/><path d="M525.9 318.1L274.2 433.3M406.2 319.8L675.0 429.4M529.9 319.9L277.8 434.2M402.5 321.8L671.4 430.4M596.5 351.2L340.3 449.9M340.9 354.5L609.3 447.5M599.8 352.8L343.5 450.7M337.9 356.2L606.2 448.3M655.3 378.9L398.3 464.4M287.1 383.2L552.3 463.1M658.1 380.2L401.1 465.1M284.5 384.6L549.5 463.9M705.8 402.6L450.2 477.5M241.2 407.6L501.6 477.0M708.2 403.7L452.7 478.1M239.1 408.8L499.2 477.7" stroke="#4a4a4a" stroke-opacity="0.7" stroke-width="1"/><path d="M525.9 318.1L464.5 391.5M527.5 318.5L466.1 391.9M525.9 318.1L531.3 415.1M527.5 318.5L532.9 415.5M525.9 318.1L519.3 435.5M527.5 318.5L520.9 435.9M406.2 319.8L464.5 391.5M407.8 320.2L466.1 391.9M406.2 319.8L403.1 416.5M407.8 320.2L404.7 416.9M406.2 319.8L415.8 436.4M407.8 320.2L417.4 436.8M675.0 429.4L652.4 478.8M676.6 429.8L654.0 479.2M675.0 429.4L584.8 494.7M676.6 429.8L586.4 495.1M274.2 433.3L295.2 481.0M275.8 433.7L296.8 481.4M274.2 433.3L363.5 495.8M275.8 433.7L365.1 496.2M596.5 351.2L512.8 408.6M598.1 351.6L514.4 409.0M596.5 351.2L577.1 431.2M598.1 351.6L578.7 431.6M596.5 351.2L565.3 452.4M598.1 351.6L566.9 452.8M340.9 354.5L420.0 409.6M342.5 354.9L421.6 410.0M340.9 354.5L361.4 433.5M342.5 354.9L363.0 433.9M340.9 354.5L374.0 453.9M342.5 354.9L375.6 454.3M609.3 447.5L607.7 489.3M610.9 447.9L609.3 489.7M609.3 447.5L543.0 504.5M610.9 447.9L544.6 504.9M340.3 449.9L340.2 490.8M341.9 450.3L341.8 491.2M340.3 449.9L406.4 505.1M341.9 450.3L408.0 505.5M655.3 378.9L560.4 425.4M656.9 379.3L562.0 425.8M655.3 378.9L617.2 445.4M656.9 379.3L618.8 445.8M655.3 378.9L604.8 466.8M656.9 379.3L606.4 467.2M287.1 383.2L376.5 427.3M288.7 383.6L378.1 427.7M287.1 383.2L325.0 448.3M288.7 383.6L326.6 448.7M287.1 383.2L338.6 468.7M288.7 383.6L340.2 469.1M552.3 463.1L563.6 499.6M553.9 463.5L565.2 500.0M552.3 463.1L506.2 513.1M553.9 463.5L507.8 513.5M398.3 464.4L385.3 500.5M399.9 464.8L386.9 500.9M398.3 464.4L444.5 513.4M399.9 464.8L446.1 513.8M705.8 402.6L602.7 440.3M707.4 403.0L604.3 440.7M705.8 402.6L653.2 458.1M707.4 403.0L654.8 458.5M705.8 402.6L639.5 479.5M707.4 403.0L641.1 479.9M241.2 407.6L338.1 443.0M242.8 408.0L339.7 443.4M241.2 407.6L292.5 461.6M242.8 408.0L294.1 462.0M241.2 407.6L307.7 481.5M242.8 408.0L309.3 481.9M501.6 477.0L524.2 508.9M503.2 477.4L525.8 509.3M501.6 477.0L476.0 520.2M503.2 477.4L477.6 520.6M450.2 477.5L425.8 509.3M451.8 477.9L427.4 509.7M450.2 477.5L476.0 520.2M451.8 477.9L477.6 520.6" stroke="#484848" stroke-opacity="0.72" stroke-width="0.9"/><path d="M219.0 419.5L476.3 484.0M730.5 414.2L476.3 484.0M221.0 418.4L478.6 483.4M728.3 413.2L473.9 483.4M223.0 417.3L480.9 482.7M726.0 412.1L471.5 482.8M225.1 416.3L483.3 482.1M723.8 411.0L469.1 482.2M227.1 415.2L485.6 481.4M721.5 410.0L466.7 481.6" stroke="#464646" stroke-opacity="0.7" stroke-width="0.8"/><path d="M295.2 481.0L476.0 520.2M476.0 520.2L652.4 478.8M210.7 416.4L295.2 481.0M737.5 411.5L652.4 478.8M219.0 419.5L295.2 464.0M730.5 414.2L652.4 461.0" stroke="#5c5c5c" stroke-width="0.9"/><path d="M295.2 464.0L295.2 481.0M297.2 464.0L297.2 480.5M652.4 460.5L652.4 478.8M650.4 460.5L650.4 478.3M356.7 477.8L356.7 494.3M358.7 477.8L358.7 493.8M592.4 475.5L592.4 492.9M590.4 475.5L590.4 492.4M416.3 491.1L416.3 507.3M418.3 491.1L418.3 506.8M534.2 490.0L534.2 506.5M532.2 490.0L532.2 506.0M476.0 504.5L476.0 520.2M478.0 504.5L478.0 519.7M476.0 504.5L476.0 520.2M474.0 504.5L474.0 519.7" stroke="#585858" stroke-width="0.8"/><path d="M291.5 462.0L476.3 502.5M476.3 502.5L654.3 458.5" stroke="#5e5e5e" stroke-width="2.200"/><path d="M291.700 465L476.300 505.500L654 461.500" stroke="#545454" stroke-width="1"/><path d="M464.5 391.5L291.5 462.0M464.5 391.5L654.3 458.5" stroke="#646464" stroke-width="2.400"/><path d="M522.1 411.8L345.3 473.8M411.6 413.1L602.1 471.4M572.0 429.4L393.5 484.4M366.0 431.6L555.5 482.9M615.7 444.9L436.9 493.9M326.3 447.8L513.9 493.2" stroke="#484848" stroke-width="1.200"/><path d="M565.0 407.1h1.600M595.5 419.2h1.600M598.1 420.2h1.600M600.6 421.2h1.600M464.9 380.4h1.600M467.5 381.3h1.600M470.1 382.3h1.600M480.3 386.2h1.600M482.9 387.2h1.600M485.4 388.1h1.600M488.0 389.1h1.600M490.5 390.1h1.600M493.1 391.0h1.600M495.7 392.0h1.600M498.2 393.0h1.600M500.8 394.0h1.600M572.4 421.1h1.600M575.0 422.1h1.600M577.6 423.1h1.600M580.1 424.1h1.600M469.9 394.3h1.600M472.5 395.3h1.600M475.1 396.2h1.600M477.6 397.1h1.600M480.2 398.1h1.600M485.3 400.0h1.600M487.9 400.9h1.600M544.3 421.7h1.600M546.9 422.6h1.600M549.4 423.6h1.600M552.0 424.5h1.600M554.6 425.5h1.600M557.1 426.4h1.600M559.7 427.4h1.600M562.3 428.3h1.600M564.8 429.3h1.600M567.4 430.2h1.600M420.6 399.5h1.600M423.1 400.4h1.600M425.7 401.3h1.600M428.3 402.1h1.600M430.8 403.0h1.600M433.4 403.9h1.600M435.9 404.7h1.600M438.5 405.6h1.600M441.0 406.5h1.600M443.6 407.4h1.600M404.4 414.1h1.600M473.3 436.0h1.600M475.8 436.8h1.600M478.4 437.7h1.600M481.0 438.5h1.600M483.5 439.3h1.600M486.1 440.1h1.600M353.2 407.6h1.600M355.7 408.4h1.600M358.3 409.2h1.600M360.8 410.0h1.600M391.5 419.4h1.600M394.0 420.2h1.600M396.6 421.0h1.600M399.2 421.7h1.600M401.7 422.5h1.600M404.3 423.3h1.600M440.0 434.3h1.600M442.6 435.1h1.600M488.5 449.3h1.600M491.1 450.0h1.600M493.7 450.8h1.600M496.2 451.6h1.600M498.8 452.4h1.600M501.3 453.2h1.600M503.9 454.0h1.600M506.4 454.8h1.600M509.0 455.5h1.600M341.4 412.7h1.600M343.9 413.4h1.600M379.5 424.1h1.600M382.1 424.9h1.600M483.9 455.3h1.600M486.4 456.1h1.600M488.9 456.8h1.600M491.5 457.6h1.600M330.4 418.4h1.600M332.9 419.1h1.600M335.4 419.8h1.600M370.8 430.0h1.600M319.0 423.2h1.600M321.5 423.9h1.600M324.0 424.6h1.600M326.5 425.3h1.600M341.7 429.5h1.600M344.2 430.3h1.600M346.8 431.0h1.600M349.3 431.7h1.600M367.0 436.6h1.600M447.9 459.4h1.600M450.4 460.1h1.600M348.8 439.3h1.600M351.3 440.0h1.600M353.8 440.6h1.600M361.3 442.7h1.600M363.9 443.4h1.600M366.4 444.0h1.600M436.8 463.0h1.600M415.6 464.3h1.600M418.1 465.0h1.600M420.6 465.6h1.600M423.1 466.3h1.600M425.6 466.9h1.600M428.1 467.6h1.600" stroke="#0c0c0c" stroke-width="1.600"/><path d="M562.4 406.1h1.600M567.5 408.1h1.600M462.4 379.4h1.600M472.6 383.3h1.600M449.4 386.8h1.600M452.0 387.7h1.600M482.7 399.0h1.600M500.7 405.6h1.600M541.8 420.8h1.600M570.0 431.1h1.600M463.1 403.3h1.600M418.0 398.6h1.600M446.1 408.2h1.600M448.7 409.1h1.600M394.5 401.2h1.600M397.1 402.1h1.600M412.4 407.1h1.600M489.1 432.2h1.600M491.6 433.0h1.600M371.2 403.5h1.600M373.7 404.3h1.600M401.8 413.3h1.600M406.9 414.9h1.600M468.2 434.4h1.600M470.7 435.2h1.600M363.4 410.7h1.600M406.8 424.1h1.600M429.8 431.2h1.600M432.4 432.0h1.600M434.9 432.7h1.600M437.5 433.5h1.600M511.5 456.3h1.600M377.0 423.3h1.600M384.6 425.6h1.600M471.1 451.5h1.600M481.3 454.5h1.600M494.0 458.3h1.600M514.4 464.4h1.600M368.3 429.3h1.600M351.8 432.4h1.600M354.4 433.1h1.600M364.5 435.9h1.600M369.5 437.3h1.600M445.4 458.6h1.600M452.9 460.8h1.600M343.8 437.9h1.600M346.3 438.6h1.600M356.3 441.3h1.600M358.8 442.0h1.600M439.3 463.7h1.600M345.6 445.8h1.600M348.1 446.5h1.600M350.6 447.1h1.600M353.1 447.8h1.600M413.1 463.6h1.600" stroke="#161008" stroke-width="1.600"/><path d="M571.0 396.8h1.600M559.9 405.1h1.600M603.2 422.2h1.600M439.3 370.7h1.600M459.8 378.4h1.600M475.2 384.2h1.600M477.7 385.2h1.600M562.2 417.3h1.600M569.9 420.2h1.600M582.7 425.0h1.600M446.8 385.8h1.600M454.5 388.6h1.600M490.4 401.9h1.600M498.1 404.7h1.600M503.3 406.6h1.600M429.8 391.5h1.600M432.4 392.4h1.600M450.3 398.7h1.600M460.5 402.4h1.600M465.7 404.2h1.600M410.4 396.0h1.600M412.9 396.9h1.600M451.3 410.0h1.600M399.6 402.9h1.600M415.0 407.9h1.600M486.5 431.3h1.600M494.2 433.8h1.600M496.7 434.7h1.600M368.6 402.7h1.600M376.3 405.2h1.600M409.5 415.7h1.600M465.6 433.6h1.600M488.6 440.9h1.600M388.9 418.6h1.600M427.2 430.4h1.600M445.1 435.9h1.600M486.0 448.5h1.600M514.1 457.1h1.600M516.6 457.9h1.600M532.0 462.6h1.600M534.5 463.4h1.600M346.5 414.2h1.600M387.2 426.4h1.600M389.7 427.1h1.600M473.7 452.3h1.600M511.9 463.7h1.600M516.9 465.2h1.600M365.8 428.6h1.600M477.0 460.7h1.600M329.1 426.0h1.600M339.2 428.8h1.600M356.9 433.8h1.600M359.4 434.5h1.600M361.9 435.2h1.600M313.6 429.8h1.600M316.1 430.5h1.600M341.2 437.2h1.600M368.9 444.7h1.600M421.7 458.9h1.600M434.3 462.3h1.600M340.6 444.5h1.600M343.1 445.1h1.600M355.6 448.4h1.600M358.1 449.1h1.600M403.1 461.0h1.600M405.6 461.7h1.600M408.1 462.3h1.600M410.6 463.0h1.600M430.6 468.3h1.600" stroke="#3a280c" stroke-width="1.600"/><path d="M568.4 395.7h1.600M573.5 397.8h1.600M576.1 398.9h1.600M557.4 404.0h1.600M593.0 418.2h1.600M436.8 369.7h1.600M503.3 394.9h1.600M557.1 415.3h1.600M559.6 416.3h1.600M564.8 418.2h1.600M567.3 419.2h1.600M467.4 393.4h1.600M493.0 402.8h1.600M495.6 403.8h1.600M539.2 419.8h1.600M580.2 434.9h1.600M427.3 390.6h1.600M434.9 393.3h1.600M437.5 394.2h1.600M440.1 395.1h1.600M447.7 397.8h1.600M452.9 399.7h1.600M455.4 400.6h1.600M458.0 401.5h1.600M468.2 405.1h1.600M537.3 429.5h1.600M539.9 430.4h1.600M570.6 441.3h1.600M407.8 395.2h1.600M415.5 397.8h1.600M392.0 400.4h1.600M409.8 406.3h1.600M478.8 428.8h1.600M481.4 429.7h1.600M484.0 430.5h1.600M499.3 435.5h1.600M501.8 436.4h1.600M504.4 437.2h1.600M366.1 401.9h1.600M378.8 406.0h1.600M463.1 432.8h1.600M491.2 441.7h1.600M424.7 429.6h1.600M519.2 458.7h1.600M529.4 461.8h1.600M349.0 415.0h1.600M351.5 415.7h1.600M392.3 427.9h1.600M468.6 450.7h1.600M476.2 453.0h1.600M478.8 453.8h1.600M496.6 459.1h1.600M522.0 466.7h1.600M337.9 420.6h1.600M358.2 426.4h1.600M360.7 427.1h1.600M363.2 427.8h1.600M373.3 430.8h1.600M474.4 459.9h1.600M442.8 457.9h1.600M455.5 461.5h1.600M311.1 429.1h1.600M338.7 436.6h1.600M381.5 448.1h1.600M414.1 456.9h1.600M419.2 458.3h1.600M338.1 443.8h1.600M360.6 449.8h1.600" stroke="#8a5e1c" stroke-width="1.600"/><path d="M578.6 399.9h1.600M581.2 401.0h1.600M583.7 402.0h1.600M599.0 408.4h1.600M601.5 409.4h1.600M604.1 410.5h1.600M606.6 411.5h1.600M609.2 412.6h1.600M611.7 413.6h1.600M511.5 385.9h1.600M514.1 386.9h1.600M554.8 403.0h1.600M570.1 409.1h1.600M590.4 417.2h1.600M605.7 423.2h1.600M441.9 371.6h1.600M457.3 377.5h1.600M505.9 395.9h1.600M554.5 414.3h1.600M585.2 426.0h1.600M421.2 376.4h1.600M444.3 384.9h1.600M457.1 389.6h1.600M464.8 392.4h1.600M505.8 407.5h1.600M536.6 418.9h1.600M572.5 432.1h1.600M575.1 433.0h1.600M577.7 434.0h1.600M582.8 435.9h1.600M585.4 436.8h1.600M587.9 437.8h1.600M590.5 438.7h1.600M593.1 439.6h1.600M424.7 389.7h1.600M442.6 396.0h1.600M445.2 396.9h1.600M470.8 406.0h1.600M473.3 406.9h1.600M475.9 407.8h1.600M478.5 408.7h1.600M481.0 409.6h1.600M483.6 410.5h1.600M486.1 411.4h1.600M488.7 412.3h1.600M491.3 413.2h1.600M534.8 428.6h1.600M542.4 431.3h1.600M568.0 440.4h1.600M573.2 442.2h1.600M453.8 410.8h1.600M499.8 426.5h1.600M502.4 427.4h1.600M473.7 427.2h1.600M476.3 428.0h1.600M507.0 438.0h1.600M553.0 453.1h1.600M555.5 453.9h1.600M381.4 406.8h1.600M383.9 407.6h1.600M399.3 412.5h1.600M493.7 442.5h1.600M365.9 411.5h1.600M386.4 417.8h1.600M409.4 424.9h1.600M422.1 428.8h1.600M447.7 436.7h1.600M463.0 441.4h1.600M465.6 442.2h1.600M468.1 443.0h1.600M480.9 446.9h1.600M483.4 447.7h1.600M521.8 459.5h1.600M526.9 461.0h1.600M354.1 416.5h1.600M374.4 422.6h1.600M394.8 428.7h1.600M499.1 459.9h1.600M509.3 462.9h1.600M519.5 466.0h1.600M355.6 425.7h1.600M375.9 431.5h1.600M479.5 461.4h1.600M482.0 462.1h1.600M331.6 426.7h1.600M336.7 428.1h1.600M372.0 438.1h1.600M394.8 444.4h1.600M458.0 462.2h1.600M308.6 428.4h1.600M318.6 431.2h1.600M336.2 435.9h1.600M378.9 447.4h1.600M411.6 456.2h1.600M416.7 457.6h1.600M424.2 459.6h1.600M441.8 464.4h1.600M335.6 443.1h1.600M363.1 450.4h1.600M365.6 451.1h1.600M368.1 451.7h1.600M370.6 452.4h1.600M373.1 453.1h1.600M400.6 460.3h1.600M433.1 468.9h1.600" stroke="#e89c34" stroke-width="1.600"/><path d="M565.9 394.6h1.600M596.4 407.3h1.600M614.3 414.7h1.600M509.0 384.9h1.600M524.3 390.9h1.600M526.8 391.9h1.600M529.3 393.0h1.600M552.3 402.0h1.600M572.6 410.1h1.600M587.9 416.1h1.600M444.5 372.6h1.600M508.5 396.9h1.600M552.0 413.4h1.600M587.8 427.0h1.600M590.4 427.9h1.600M441.7 383.9h1.600M459.7 390.5h1.600M462.2 391.5h1.600M508.4 408.5h1.600M534.1 417.9h1.600M595.6 440.6h1.600M598.2 441.5h1.600M422.1 388.8h1.600M493.8 414.1h1.600M545.0 432.3h1.600M547.6 433.2h1.600M550.1 434.1h1.600M552.7 435.0h1.600M555.2 435.9h1.600M557.8 436.8h1.600M560.4 437.7h1.600M565.5 439.5h1.600M588.5 447.6h1.600M405.3 394.3h1.600M497.3 425.6h1.600M389.4 399.6h1.600M402.2 403.7h1.600M407.3 405.4h1.600M417.5 408.8h1.600M435.4 414.6h1.600M448.2 418.8h1.600M450.7 419.6h1.600M545.3 450.6h1.600M547.8 451.4h1.600M550.4 452.2h1.600M386.5 408.4h1.600M412.0 416.5h1.600M460.5 432.0h1.600M496.3 443.3h1.600M368.5 412.3h1.600M460.5 440.6h1.600M470.7 443.8h1.600M478.3 446.1h1.600M524.3 460.3h1.600M356.6 417.2h1.600M364.3 419.5h1.600M366.8 420.3h1.600M369.4 421.1h1.600M371.9 421.8h1.600M397.3 429.4h1.600M399.9 430.2h1.600M402.4 430.9h1.600M405.0 431.7h1.600M407.5 432.5h1.600M466.1 450.0h1.600M501.7 460.6h1.600M504.2 461.4h1.600M506.8 462.2h1.600M340.5 421.3h1.600M353.1 424.9h1.600M471.9 459.2h1.600M334.1 427.4h1.600M379.6 440.2h1.600M382.2 440.9h1.600M392.3 443.7h1.600M397.3 445.2h1.600M440.3 457.2h1.600M460.5 462.9h1.600M473.2 466.4h1.600M371.4 445.4h1.600M376.4 446.7h1.600M384.0 448.8h1.600M409.1 455.6h1.600M431.7 461.6h1.600M444.3 465.0h1.600M375.6 453.7h1.600M398.1 459.7h1.600" stroke="#f77a5c" stroke-width="1.600"/><path d="M469.1 354.5h1.600M471.6 355.6h1.600M474.2 356.6h1.600M476.7 357.7h1.600M479.3 358.8h1.600M481.8 359.8h1.600M484.4 360.9h1.600M486.9 361.9h1.600M489.5 363.0h1.600M492.0 364.0h1.600M494.5 365.1h1.600M497.1 366.1h1.600M499.6 367.2h1.600M502.2 368.2h1.600M504.7 369.3h1.600M507.3 370.4h1.600M509.8 371.4h1.600M512.4 372.5h1.600M514.9 373.5h1.600M517.5 374.6h1.600M520.0 375.6h1.600M522.6 376.7h1.600M525.1 377.8h1.600M527.7 378.8h1.600M530.2 379.9h1.600M532.8 380.9h1.600M535.3 382.0h1.600M537.8 383.0h1.600M540.4 384.1h1.600M542.9 385.1h1.600M545.5 386.2h1.600M548.0 387.2h1.600M550.6 388.3h1.600M553.1 389.4h1.600M555.7 390.4h1.600M558.2 391.5h1.600M560.8 392.5h1.600M563.3 393.6h1.600M586.2 403.1h1.600M588.8 404.1h1.600M591.3 405.2h1.600M593.9 406.2h1.600M616.8 415.8h1.600M619.4 416.8h1.600M621.9 417.9h1.600M624.5 418.9h1.600M627.0 420.0h1.600M629.5 421.0h1.600M632.1 422.1h1.600M634.6 423.1h1.600M637.2 424.2h1.600M639.7 425.2h1.600M642.3 426.3h1.600M644.8 427.4h1.600M647.4 428.4h1.600M649.9 429.5h1.600M453.0 362.7h1.600M455.5 363.7h1.600M458.1 364.7h1.600M460.6 365.7h1.600M463.2 366.7h1.600M465.7 367.7h1.600M468.2 368.8h1.600M470.8 369.8h1.600M473.3 370.8h1.600M475.9 371.8h1.600M478.4 372.8h1.600M481.0 373.8h1.600M483.5 374.8h1.600M486.1 375.8h1.600M488.6 376.8h1.600M491.2 377.8h1.600M493.7 378.8h1.600M496.3 379.8h1.600M498.8 380.9h1.600M501.3 381.9h1.600M503.9 382.9h1.600M506.4 383.9h1.600M516.6 387.9h1.600M519.2 388.9h1.600M521.7 389.9h1.600M531.9 394.0h1.600M534.4 395.0h1.600M537.0 396.0h1.600M539.5 397.0h1.600M542.1 398.0h1.600M544.6 399.0h1.600M547.2 400.0h1.600M549.7 401.0h1.600M575.2 411.1h1.600M577.7 412.1h1.600M580.3 413.1h1.600M582.8 414.1h1.600M585.4 415.1h1.600M608.3 424.2h1.600M610.8 425.2h1.600M613.4 426.2h1.600M615.9 427.2h1.600M618.5 428.2h1.600M621.0 429.3h1.600M623.5 430.3h1.600M626.1 431.3h1.600M628.6 432.3h1.600M631.2 433.3h1.600M633.7 434.3h1.600M447.0 373.6h1.600M449.6 374.5h1.600M452.1 375.5h1.600M454.7 376.5h1.600M511.0 397.8h1.600M513.6 398.8h1.600M516.1 399.8h1.600M518.7 400.8h1.600M521.3 401.7h1.600M523.8 402.7h1.600M526.4 403.7h1.600M528.9 404.6h1.600M531.5 405.6h1.600M534.0 406.6h1.600M536.6 407.5h1.600M539.2 408.5h1.600M541.7 409.5h1.600M544.3 410.5h1.600M546.8 411.4h1.600M549.4 412.4h1.600M592.9 428.9h1.600M595.5 429.9h1.600M598.0 430.8h1.600M600.6 431.8h1.600M603.2 432.8h1.600M605.7 433.8h1.600M608.3 434.7h1.600M610.8 435.7h1.600M613.4 436.7h1.600M616.0 437.6h1.600M618.5 438.6h1.600M423.7 377.3h1.600M426.3 378.3h1.600M428.9 379.2h1.600M431.4 380.1h1.600M434.0 381.1h1.600M436.6 382.0h1.600M439.1 383.0h1.600M511.0 409.4h1.600M513.5 410.4h1.600M516.1 411.3h1.600M518.7 412.3h1.600M521.2 413.2h1.600M523.8 414.1h1.600M526.4 415.1h1.600M528.9 416.0h1.600M531.5 417.0h1.600M600.8 442.5h1.600M603.3 443.4h1.600M406.8 383.4h1.600M409.3 384.3h1.600M411.9 385.2h1.600M414.5 386.1h1.600M417.0 387.0h1.600M419.6 387.9h1.600M496.4 415.0h1.600M498.9 416.0h1.600M501.5 416.9h1.600M504.0 417.8h1.600M506.6 418.7h1.600M509.2 419.6h1.600M511.7 420.5h1.600M514.3 421.4h1.600M516.8 422.3h1.600M519.4 423.2h1.600M522.0 424.1h1.600M524.5 425.0h1.600M527.1 425.9h1.600M529.6 426.8h1.600M532.2 427.7h1.600M562.9 438.6h1.600M575.7 443.1h1.600M578.3 444.0h1.600M580.8 444.9h1.600M583.4 445.8h1.600M586.0 446.7h1.600M392.5 389.9h1.600M395.0 390.8h1.600M397.6 391.7h1.600M400.1 392.5h1.600M402.7 393.4h1.600M456.4 411.7h1.600M458.9 412.6h1.600M461.5 413.4h1.600M464.0 414.3h1.600M466.6 415.2h1.600M469.1 416.1h1.600M471.7 416.9h1.600M474.3 417.8h1.600M476.8 418.7h1.600M479.4 419.5h1.600M481.9 420.4h1.600M484.5 421.3h1.600M487.0 422.2h1.600M489.6 423.0h1.600M492.1 423.9h1.600M494.7 424.8h1.600M504.9 428.3h1.600M507.5 429.1h1.600M510.0 430.0h1.600M512.6 430.9h1.600M515.1 431.7h1.600M517.7 432.6h1.600M520.3 433.5h1.600M522.8 434.3h1.600M525.4 435.2h1.600M527.9 436.1h1.600M530.5 437.0h1.600M533.0 437.8h1.600M535.6 438.7h1.600M538.1 439.6h1.600M540.7 440.4h1.600M543.3 441.3h1.600M545.8 442.2h1.600M548.4 443.1h1.600M550.9 443.9h1.600M553.5 444.8h1.600M556.0 445.7h1.600M558.6 446.5h1.600M561.1 447.4h1.600M563.7 448.3h1.600M566.3 449.2h1.600M568.8 450.0h1.600M571.4 450.9h1.600M573.9 451.8h1.600M379.2 396.2h1.600M381.7 397.1h1.600M384.3 397.9h1.600M386.8 398.7h1.600M404.7 404.6h1.600M420.1 409.6h1.600M422.6 410.4h1.600M425.2 411.3h1.600M427.7 412.1h1.600M430.3 412.9h1.600M432.8 413.8h1.600M438.0 415.4h1.600M440.5 416.3h1.600M443.1 417.1h1.600M445.6 418.0h1.600M453.3 420.5h1.600M455.8 421.3h1.600M458.4 422.1h1.600M461.0 423.0h1.600M463.5 423.8h1.600M466.1 424.6h1.600M468.6 425.5h1.600M471.2 426.3h1.600M509.5 438.9h1.600M512.1 439.7h1.600M514.6 440.5h1.600M517.2 441.4h1.600M519.7 442.2h1.600M522.3 443.0h1.600M524.8 443.9h1.600M527.4 444.7h1.600M530.0 445.5h1.600M532.5 446.4h1.600M535.1 447.2h1.600M537.6 448.1h1.600M540.2 448.9h1.600M542.7 449.7h1.600M558.1 454.7h1.600M560.6 455.6h1.600M389.1 409.2h1.600M391.6 410.0h1.600M394.2 410.8h1.600M396.7 411.7h1.600M414.6 417.3h1.600M417.1 418.2h1.600M419.7 419.0h1.600M422.2 419.8h1.600M424.8 420.6h1.600M427.3 421.4h1.600M429.9 422.2h1.600M432.4 423.0h1.600M435.0 423.8h1.600M437.6 424.7h1.600M440.1 425.5h1.600M442.7 426.3h1.600M445.2 427.1h1.600M447.8 427.9h1.600M450.3 428.7h1.600M452.9 429.5h1.600M455.4 430.3h1.600M458.0 431.2h1.600M498.8 444.2h1.600M501.4 445.0h1.600M503.9 445.8h1.600M506.5 446.6h1.600M509.0 447.4h1.600M511.6 448.2h1.600M514.1 449.0h1.600M516.7 449.8h1.600M519.2 450.7h1.600M521.8 451.5h1.600M524.3 452.3h1.600M526.9 453.1h1.600M529.5 453.9h1.600M532.0 454.7h1.600M534.6 455.5h1.600M537.1 456.3h1.600M539.7 457.2h1.600M542.2 458.0h1.600M544.8 458.8h1.600M547.3 459.6h1.600M371.1 413.1h1.600M373.6 413.9h1.600M376.2 414.7h1.600M378.7 415.5h1.600M381.3 416.2h1.600M383.8 417.0h1.600M411.9 425.7h1.600M414.5 426.5h1.600M417.0 427.2h1.600M419.6 428.0h1.600M450.2 437.5h1.600M452.8 438.3h1.600M455.3 439.0h1.600M457.9 439.8h1.600M473.2 444.5h1.600M475.8 445.3h1.600M359.2 418.0h1.600M361.7 418.8h1.600M410.1 433.2h1.600M412.6 434.0h1.600M415.2 434.8h1.600M417.7 435.5h1.600M420.2 436.3h1.600M422.8 437.0h1.600M425.3 437.8h1.600M427.9 438.6h1.600M430.4 439.3h1.600M433.0 440.1h1.600M435.5 440.8h1.600M438.1 441.6h1.600M440.6 442.4h1.600M443.1 443.1h1.600M445.7 443.9h1.600M448.2 444.6h1.600M450.8 445.4h1.600M453.3 446.2h1.600M455.9 446.9h1.600M458.4 447.7h1.600M461.0 448.5h1.600M463.5 449.2h1.600M343.0 422.0h1.600M345.5 422.7h1.600M348.1 423.5h1.600M350.6 424.2h1.600M378.4 432.2h1.600M380.9 432.9h1.600M383.4 433.7h1.600M386.0 434.4h1.600M388.5 435.1h1.600M391.0 435.9h1.600M393.6 436.6h1.600M396.1 437.3h1.600M398.6 438.1h1.600M401.1 438.8h1.600M403.7 439.5h1.600M406.2 440.2h1.600M408.7 441.0h1.600M411.3 441.7h1.600M413.8 442.4h1.600M416.3 443.2h1.600M418.8 443.9h1.600M421.4 444.6h1.600M423.9 445.3h1.600M426.4 446.1h1.600M428.9 446.8h1.600M431.5 447.5h1.600M434.0 448.3h1.600M436.5 449.0h1.600M439.1 449.7h1.600M441.6 450.4h1.600M444.1 451.2h1.600M446.6 451.9h1.600M449.2 452.6h1.600M451.7 453.4h1.600M454.2 454.1h1.600M456.8 454.8h1.600M459.3 455.6h1.600M461.8 456.3h1.600M464.3 457.0h1.600M466.9 457.7h1.600M469.4 458.5h1.600M484.6 462.8h1.600M487.1 463.6h1.600M489.6 464.3h1.600M492.1 465.0h1.600M494.7 465.8h1.600M497.2 466.5h1.600M499.7 467.2h1.600M502.3 467.9h1.600M504.8 468.7h1.600M507.3 469.4h1.600M509.8 470.1h1.600M374.6 438.8h1.600M377.1 439.5h1.600M384.7 441.6h1.600M387.2 442.3h1.600M389.7 443.0h1.600M399.9 445.9h1.600M402.4 446.6h1.600M404.9 447.3h1.600M407.4 448.0h1.600M410.0 448.7h1.600M412.5 449.4h1.600M415.0 450.1h1.600M417.5 450.8h1.600M420.1 451.5h1.600M422.6 452.3h1.600M425.1 453.0h1.600M427.7 453.7h1.600M430.2 454.4h1.600M432.7 455.1h1.600M435.2 455.8h1.600M437.8 456.5h1.600M463.0 463.6h1.600M465.6 464.3h1.600M468.1 465.0h1.600M470.6 465.7h1.600M475.7 467.2h1.600M478.2 467.9h1.600M480.7 468.6h1.600M483.3 469.3h1.600M485.8 470.0h1.600M488.3 470.7h1.600M490.9 471.4h1.600M493.4 472.1h1.600M495.9 472.8h1.600M498.4 473.5h1.600M321.1 431.8h1.600M323.6 432.5h1.600M326.2 433.2h1.600M328.7 433.9h1.600M331.2 434.5h1.600M333.7 435.2h1.600M373.9 446.1h1.600M386.5 449.4h1.600M389.0 450.1h1.600M391.5 450.8h1.600M394.0 451.5h1.600M396.5 452.2h1.600M399.1 452.8h1.600M401.6 453.5h1.600M404.1 454.2h1.600M406.6 454.9h1.600M426.7 460.3h1.600M429.2 461.0h1.600M446.8 465.7h1.600M449.3 466.4h1.600M451.8 467.1h1.600M454.4 467.8h1.600M456.9 468.4h1.600M459.4 469.1h1.600M461.9 469.8h1.600M464.4 470.5h1.600M466.9 471.1h1.600M469.4 471.8h1.600M472.0 472.5h1.600M474.5 473.2h1.600M477.0 473.8h1.600M479.5 474.5h1.600M482.0 475.2h1.600M484.5 475.9h1.600M487.0 476.6h1.600M298.1 433.2h1.600M300.6 433.9h1.600M303.1 434.6h1.600M305.6 435.2h1.600M308.1 435.9h1.600M310.6 436.5h1.600M313.1 437.2h1.600M315.6 437.9h1.600M318.1 438.5h1.600M320.6 439.2h1.600M323.1 439.8h1.600M325.6 440.5h1.600M328.1 441.2h1.600M330.6 441.8h1.600M333.1 442.5h1.600M378.1 454.4h1.600M380.6 455.0h1.600M383.1 455.7h1.600M385.6 456.4h1.600M388.1 457.0h1.600M390.6 457.7h1.600M393.1 458.4h1.600M395.6 459.0h1.600M435.6 469.6h1.600M438.1 470.3h1.600M440.6 470.9h1.600M443.1 471.6h1.600M445.6 472.2h1.600M448.1 472.9h1.600M450.6 473.6h1.600M453.1 474.2h1.600M455.6 474.9h1.600M458.1 475.5h1.600M460.6 476.2h1.600M463.1 476.9h1.600M465.6 477.5h1.600M468.1 478.2h1.600M470.6 478.8h1.600M473.1 479.5h1.600M475.6 480.2h1.600" stroke="#ff5a73" stroke-width="1.600"/><path d="M483.8 363.5L556.0 392.0M582.6 403.8L637.7 426.2M418.3 392.0L487.6 416.7M362.2 417.7L430.6 438.6M515.2 426.2L571.2 445.2M457.2 446.2L513.3 462.3M314.7 438.6L337.5 444.3M440.0 470.9L461.0 476.5" stroke="#5a5a5a" stroke-width="3" stroke-linecap="round"/><path d="M463.8 274.2L737.5 411.5M463.8 274.2L210.7 416.4" stroke="#8e8e8e" stroke-width="1"/><path d="M464.0 289.0L730.5 414.2M464.0 289.0L219.0 419.5" stroke="#808080" stroke-width="1"/><path d="M462.800 274V289M464.800 274V289" stroke="#9a9a9a" stroke-width="0.900"/><path d="M464.800 295V391" stroke="#7c7c7c" stroke-width="1" stroke-dasharray="17 3"/><path d="M463 398V412M465 398V414M467 398V412M469 400V410" stroke="#666" stroke-width="0.700"/><path d="M138.500 1033.500V1021" stroke="#4a7a4a" stroke-width="0.800"/><path d="M138.500 1033.500L130 1035.500" stroke="#7a3a3a" stroke-width="0.800"/><path d="M138.500 1033.500L148.500 1034.500" stroke="#3a3a7a" stroke-width="0.800"/><path d="M139.500 1018l1 1.500 1-1.500M140.500 1019.500v1.500" stroke="#4a7a4a" stroke-width="0.500"/><path d="M129 1033.500l1.600 2M130.600 1033.500l-1.600 2" stroke="#7a3a3a" stroke-width="0.500"/><path d="M149.500 1033h1.500l-1.500 2h1.500" stroke="#3a3a7a" stroke-width="0.500"/></svg><span class="t" style="left:2px;top:-0.5px;font-size:9.500px;color:#c8c8c8">User (Perspective)</span><span class="t" style="left:2px;top:11.2px;font-size:9.500px;color:#c8c8c8">Adaptive Homing: Off</span><span class="t" style="left:2px;top:22.9px;font-size:9.500px;color:#c8c8c8">Grid: 0/1</span></div>
<div class="a" style="left:977px;top:75px;width:995px;height:995px;background:#000"></div><svg style="left:977px;top:75px" width="995" height="995" viewBox="977 75 995 995"><g fill="none" stroke-linecap="round"><path stroke="#130d05" stroke-opacity="0.32" stroke-width="5.900" d="M1190.2 643.6h0M1190.2 662.6h0M1241.9 331.1h0M1241.9 369.0h0M1293.7 340.5h0M1293.7 350.0h0M1293.7 463.7h0M1293.7 530.0h0M1293.7 681.5h0M1293.7 785.7h0M1345.4 444.7h0M1397.1 331.1h0M1397.1 435.3h0M1397.1 444.7h0M1448.8 293.2h0M1448.8 302.7h0M1448.8 359.5h0M1448.8 643.6h0M1448.8 653.1h0M1500.5 255.3h0M1500.5 264.8h0M1500.5 369.0h0M1500.5 387.9h0M1500.5 615.2h0M1500.5 624.7h0M1552.3 274.2h0M1552.3 435.3h0M1552.3 520.5h0M1552.3 530.0h0M1552.3 539.5h0M1552.3 548.9h0M1552.3 823.6h0M1604.0 369.0h0M1604.0 397.4h0M1604.0 719.4h0M1604.0 757.3h0M1604.0 804.7h0M1604.0 880.4h0M1655.7 378.4h0M1707.4 359.5h0M1707.4 369.0h0M1707.4 406.8h0M1707.4 425.8h0M1707.4 709.9h0M1707.4 738.4h0M1759.1 369.0h0M1759.1 378.4h0M1759.1 416.3h0M1759.1 425.8h0M1759.1 728.9h0M1810.9 416.3h0M1810.9 425.8h0M1810.9 435.3h0M1810.9 444.7h0M1810.9 672.1h0"/><path stroke="#130d05" stroke-width="4" d="M1190.2 643.6h0M1190.2 662.6h0M1241.9 331.1h0M1241.9 369.0h0M1293.7 340.5h0M1293.7 350.0h0M1293.7 463.7h0M1293.7 530.0h0M1293.7 681.5h0M1293.7 785.7h0M1345.4 444.7h0M1397.1 331.1h0M1397.1 435.3h0M1397.1 444.7h0M1448.8 293.2h0M1448.8 302.7h0M1448.8 359.5h0M1448.8 643.6h0M1448.8 653.1h0M1500.5 255.3h0M1500.5 264.8h0M1500.5 369.0h0M1500.5 387.9h0M1500.5 615.2h0M1500.5 624.7h0M1552.3 274.2h0M1552.3 435.3h0M1552.3 520.5h0M1552.3 530.0h0M1552.3 539.5h0M1552.3 548.9h0M1552.3 823.6h0M1604.0 369.0h0M1604.0 397.4h0M1604.0 719.4h0M1604.0 757.3h0M1604.0 804.7h0M1604.0 880.4h0M1655.7 378.4h0M1707.4 359.5h0M1707.4 369.0h0M1707.4 406.8h0M1707.4 425.8h0M1707.4 709.9h0M1707.4 738.4h0M1759.1 369.0h0M1759.1 378.4h0M1759.1 416.3h0M1759.1 425.8h0M1759.1 728.9h0M1810.9 416.3h0M1810.9 425.8h0M1810.9 435.3h0M1810.9 444.7h0M1810.9 672.1h0"/><path stroke="#48300f" stroke-opacity="0.32" stroke-width="5.900" d="M1138.5 615.2h0M1190.2 634.2h0M1190.2 795.2h0M1241.9 245.8h0M1241.9 321.6h0M1241.9 378.4h0M1241.9 387.9h0M1241.9 700.5h0M1241.9 728.9h0M1241.9 776.3h0M1293.7 331.1h0M1293.7 359.5h0M1293.7 492.1h0M1293.7 520.5h0M1293.7 539.5h0M1345.4 321.6h0M1345.4 331.1h0M1345.4 397.4h0M1345.4 435.3h0M1345.4 454.2h0M1397.1 302.7h0M1397.1 312.1h0M1397.1 454.2h0M1448.8 312.1h0M1448.8 369.0h0M1448.8 634.2h0M1448.8 662.6h0M1448.8 672.1h0M1500.5 245.8h0M1500.5 274.2h0M1500.5 397.4h0M1500.5 605.8h0M1500.5 691.0h0M1552.3 369.0h0M1552.3 511.0h0M1552.3 577.3h0M1552.3 728.9h0M1552.3 833.1h0M1552.3 842.6h0M1552.3 899.4h0M1552.3 908.9h0M1604.0 255.3h0M1604.0 406.8h0M1604.0 416.3h0M1604.0 728.9h0M1604.0 871.0h0M1604.0 889.9h0M1655.7 369.0h0M1655.7 785.7h0M1707.4 274.2h0M1707.4 312.1h0M1707.4 378.4h0M1707.4 387.9h0M1707.4 397.4h0M1759.1 255.3h0M1759.1 264.8h0M1759.1 359.5h0M1759.1 463.7h0M1759.1 662.6h0M1759.1 709.9h0M1810.9 397.4h0M1810.9 406.8h0M1810.9 454.2h0M1810.9 463.7h0M1810.9 634.2h0M1810.9 643.6h0M1810.9 653.1h0M1810.9 662.6h0M1810.9 738.4h0"/><path stroke="#48300f" stroke-width="4" d="M1138.5 615.2h0M1190.2 634.2h0M1190.2 795.2h0M1241.9 245.8h0M1241.9 321.6h0M1241.9 378.4h0M1241.9 387.9h0M1241.9 700.5h0M1241.9 728.9h0M1241.9 776.3h0M1293.7 331.1h0M1293.7 359.5h0M1293.7 492.1h0M1293.7 520.5h0M1293.7 539.5h0M1345.4 321.6h0M1345.4 331.1h0M1345.4 397.4h0M1345.4 435.3h0M1345.4 454.2h0M1397.1 302.7h0M1397.1 312.1h0M1397.1 454.2h0M1448.8 312.1h0M1448.8 369.0h0M1448.8 634.2h0M1448.8 662.6h0M1448.8 672.1h0M1500.5 245.8h0M1500.5 274.2h0M1500.5 397.4h0M1500.5 605.8h0M1500.5 691.0h0M1552.3 369.0h0M1552.3 511.0h0M1552.3 577.3h0M1552.3 728.9h0M1552.3 833.1h0M1552.3 842.6h0M1552.3 899.4h0M1552.3 908.9h0M1604.0 255.3h0M1604.0 406.8h0M1604.0 416.3h0M1604.0 728.9h0M1604.0 871.0h0M1604.0 889.9h0M1655.7 369.0h0M1655.7 785.7h0M1707.4 274.2h0M1707.4 312.1h0M1707.4 378.4h0M1707.4 387.9h0M1707.4 397.4h0M1759.1 255.3h0M1759.1 264.8h0M1759.1 359.5h0M1759.1 463.7h0M1759.1 662.6h0M1759.1 709.9h0M1810.9 397.4h0M1810.9 406.8h0M1810.9 454.2h0M1810.9 463.7h0M1810.9 634.2h0M1810.9 643.6h0M1810.9 653.1h0M1810.9 662.6h0M1810.9 738.4h0"/><path stroke="#865b1c" stroke-opacity="0.32" stroke-width="5.900" d="M1138.5 605.8h0M1138.5 624.7h0M1138.5 634.2h0M1190.2 624.7h0M1190.2 757.3h0M1241.9 236.3h0M1241.9 482.6h0M1241.9 681.5h0M1241.9 691.0h0M1241.9 709.9h0M1241.9 719.4h0M1293.7 406.8h0M1293.7 501.6h0M1293.7 511.0h0M1293.7 672.1h0M1293.7 823.6h0M1345.4 312.1h0M1345.4 340.5h0M1345.4 350.0h0M1345.4 359.5h0M1345.4 387.9h0M1345.4 406.8h0M1345.4 416.3h0M1345.4 425.8h0M1345.4 463.7h0M1345.4 719.4h0M1345.4 728.9h0M1345.4 842.6h0M1397.1 293.2h0M1397.1 321.6h0M1448.8 283.7h0M1448.8 350.0h0M1448.8 605.8h0M1448.8 615.2h0M1448.8 624.7h0M1448.8 681.5h0M1448.8 691.0h0M1448.8 700.5h0M1500.5 236.3h0M1500.5 283.7h0M1500.5 596.3h0M1500.5 700.5h0M1552.3 501.6h0M1552.3 852.0h0M1552.3 889.9h0M1604.0 264.8h0M1604.0 274.2h0M1604.0 425.8h0M1604.0 709.9h0M1604.0 738.4h0M1604.0 747.8h0M1604.0 814.1h0M1604.0 908.9h0M1655.7 264.8h0M1655.7 340.5h0M1655.7 350.0h0M1655.7 359.5h0M1655.7 397.4h0M1655.7 776.3h0M1707.4 700.5h0M1707.4 747.8h0M1759.1 245.8h0M1759.1 350.0h0M1759.1 511.0h0M1759.1 634.2h0M1759.1 653.1h0M1810.9 387.9h0M1810.9 473.1h0"/><path stroke="#865b1c" stroke-width="4" d="M1138.5 605.8h0M1138.5 624.7h0M1138.5 634.2h0M1190.2 624.7h0M1190.2 757.3h0M1241.9 236.3h0M1241.9 482.6h0M1241.9 681.5h0M1241.9 691.0h0M1241.9 709.9h0M1241.9 719.4h0M1293.7 406.8h0M1293.7 501.6h0M1293.7 511.0h0M1293.7 672.1h0M1293.7 823.6h0M1345.4 312.1h0M1345.4 340.5h0M1345.4 350.0h0M1345.4 359.5h0M1345.4 387.9h0M1345.4 406.8h0M1345.4 416.3h0M1345.4 425.8h0M1345.4 463.7h0M1345.4 719.4h0M1345.4 728.9h0M1345.4 842.6h0M1397.1 293.2h0M1397.1 321.6h0M1448.8 283.7h0M1448.8 350.0h0M1448.8 605.8h0M1448.8 615.2h0M1448.8 624.7h0M1448.8 681.5h0M1448.8 691.0h0M1448.8 700.5h0M1500.5 236.3h0M1500.5 283.7h0M1500.5 596.3h0M1500.5 700.5h0M1552.3 501.6h0M1552.3 852.0h0M1552.3 889.9h0M1604.0 264.8h0M1604.0 274.2h0M1604.0 425.8h0M1604.0 709.9h0M1604.0 738.4h0M1604.0 747.8h0M1604.0 814.1h0M1604.0 908.9h0M1655.7 264.8h0M1655.7 340.5h0M1655.7 350.0h0M1655.7 359.5h0M1655.7 397.4h0M1655.7 776.3h0M1707.4 700.5h0M1707.4 747.8h0M1759.1 245.8h0M1759.1 350.0h0M1759.1 511.0h0M1759.1 634.2h0M1759.1 653.1h0M1810.9 387.9h0M1810.9 473.1h0"/><path stroke="#e8a036" stroke-opacity="0.32" stroke-width="5.900" d="M1138.5 643.6h0M1138.5 653.1h0M1138.5 662.6h0M1138.5 719.4h0M1138.5 728.9h0M1138.5 738.4h0M1138.5 747.8h0M1138.5 757.3h0M1138.5 766.8h0M1190.2 454.2h0M1190.2 463.7h0M1190.2 615.2h0M1190.2 672.1h0M1190.2 747.8h0M1190.2 804.7h0M1241.9 255.3h0M1241.9 312.1h0M1241.9 492.1h0M1241.9 672.1h0M1241.9 785.7h0M1293.7 236.3h0M1293.7 321.6h0M1293.7 369.0h0M1293.7 397.4h0M1293.7 548.9h0M1293.7 662.6h0M1293.7 795.2h0M1293.7 804.7h0M1293.7 814.1h0M1293.7 833.1h0M1293.7 842.6h0M1293.7 852.0h0M1293.7 861.5h0M1293.7 871.0h0M1345.4 302.7h0M1345.4 369.0h0M1345.4 378.4h0M1345.4 473.1h0M1345.4 482.6h0M1345.4 492.1h0M1345.4 501.6h0M1345.4 511.0h0M1345.4 520.5h0M1345.4 530.0h0M1345.4 539.5h0M1345.4 548.9h0M1345.4 709.9h0M1345.4 738.4h0M1345.4 833.1h0M1345.4 852.0h0M1397.1 463.7h0M1397.1 634.2h0M1397.1 643.6h0M1448.8 586.8h0M1448.8 596.3h0M1448.8 709.9h0M1448.8 880.4h0M1448.8 889.9h0M1500.5 293.2h0M1500.5 302.7h0M1500.5 359.5h0M1500.5 709.9h0M1552.3 283.7h0M1552.3 359.5h0M1552.3 444.7h0M1552.3 492.1h0M1552.3 586.8h0M1552.3 643.6h0M1552.3 653.1h0M1552.3 662.6h0M1552.3 709.9h0M1552.3 719.4h0M1552.3 861.5h0M1552.3 880.4h0M1604.0 283.7h0M1604.0 359.5h0M1604.0 435.3h0M1604.0 823.6h0M1604.0 861.5h0M1604.0 899.4h0M1655.7 331.1h0M1655.7 406.8h0M1655.7 795.2h0M1655.7 804.7h0M1707.4 283.7h0M1707.4 302.7h0M1707.4 435.3h0M1707.4 520.5h0M1707.4 757.3h0M1759.1 236.3h0M1759.1 274.2h0M1759.1 340.5h0M1759.1 501.6h0M1759.1 624.7h0M1759.1 643.6h0M1759.1 672.1h0M1759.1 738.4h0M1810.9 378.4h0M1810.9 482.6h0M1810.9 492.1h0M1810.9 501.6h0M1810.9 511.0h0M1810.9 520.5h0M1810.9 624.7h0M1810.9 747.8h0"/><path stroke="#e8a036" stroke-width="4" d="M1138.5 643.6h0M1138.5 653.1h0M1138.5 662.6h0M1138.5 719.4h0M1138.5 728.9h0M1138.5 738.4h0M1138.5 747.8h0M1138.5 757.3h0M1138.5 766.8h0M1190.2 454.2h0M1190.2 463.7h0M1190.2 615.2h0M1190.2 672.1h0M1190.2 747.8h0M1190.2 804.7h0M1241.9 255.3h0M1241.9 312.1h0M1241.9 492.1h0M1241.9 672.1h0M1241.9 785.7h0M1293.7 236.3h0M1293.7 321.6h0M1293.7 369.0h0M1293.7 397.4h0M1293.7 548.9h0M1293.7 662.6h0M1293.7 795.2h0M1293.7 804.7h0M1293.7 814.1h0M1293.7 833.1h0M1293.7 842.6h0M1293.7 852.0h0M1293.7 861.5h0M1293.7 871.0h0M1345.4 302.7h0M1345.4 369.0h0M1345.4 378.4h0M1345.4 473.1h0M1345.4 482.6h0M1345.4 492.1h0M1345.4 501.6h0M1345.4 511.0h0M1345.4 520.5h0M1345.4 530.0h0M1345.4 539.5h0M1345.4 548.9h0M1345.4 709.9h0M1345.4 738.4h0M1345.4 833.1h0M1345.4 852.0h0M1397.1 463.7h0M1397.1 634.2h0M1397.1 643.6h0M1448.8 586.8h0M1448.8 596.3h0M1448.8 709.9h0M1448.8 880.4h0M1448.8 889.9h0M1500.5 293.2h0M1500.5 302.7h0M1500.5 359.5h0M1500.5 709.9h0M1552.3 283.7h0M1552.3 359.5h0M1552.3 444.7h0M1552.3 492.1h0M1552.3 586.8h0M1552.3 643.6h0M1552.3 653.1h0M1552.3 662.6h0M1552.3 709.9h0M1552.3 719.4h0M1552.3 861.5h0M1552.3 880.4h0M1604.0 283.7h0M1604.0 359.5h0M1604.0 435.3h0M1604.0 823.6h0M1604.0 861.5h0M1604.0 899.4h0M1655.7 331.1h0M1655.7 406.8h0M1655.7 795.2h0M1655.7 804.7h0M1707.4 283.7h0M1707.4 302.7h0M1707.4 435.3h0M1707.4 520.5h0M1707.4 757.3h0M1759.1 236.3h0M1759.1 274.2h0M1759.1 340.5h0M1759.1 501.6h0M1759.1 624.7h0M1759.1 643.6h0M1759.1 672.1h0M1759.1 738.4h0M1810.9 378.4h0M1810.9 482.6h0M1810.9 492.1h0M1810.9 501.6h0M1810.9 511.0h0M1810.9 520.5h0M1810.9 624.7h0M1810.9 747.8h0"/><path stroke="#ff8762" stroke-opacity="0.32" stroke-width="5.900" d="M1138.5 596.3h0M1138.5 709.9h0M1138.5 776.3h0M1190.2 444.7h0M1190.2 501.6h0M1190.2 511.0h0M1190.2 520.5h0M1190.2 605.8h0M1190.2 681.5h0M1190.2 738.4h0M1241.9 264.8h0M1241.9 501.6h0M1241.9 662.6h0M1241.9 795.2h0M1241.9 804.7h0M1293.7 312.1h0M1293.7 378.4h0M1293.7 387.9h0M1293.7 558.4h0M1293.7 653.1h0M1293.7 880.4h0M1293.7 889.9h0M1345.4 293.2h0M1345.4 558.4h0M1345.4 747.8h0M1345.4 757.3h0M1345.4 766.8h0M1345.4 776.3h0M1345.4 785.7h0M1345.4 795.2h0M1345.4 804.7h0M1345.4 823.6h0M1345.4 908.9h0M1397.1 283.7h0M1397.1 624.7h0M1448.8 274.2h0M1448.8 321.6h0M1448.8 340.5h0M1448.8 378.4h0M1448.8 444.7h0M1448.8 492.1h0M1448.8 501.6h0M1448.8 852.0h0M1448.8 861.5h0M1448.8 871.0h0M1500.5 312.1h0M1500.5 406.8h0M1500.5 586.8h0M1500.5 719.4h0M1552.3 293.2h0M1552.3 634.2h0M1552.3 672.1h0M1552.3 700.5h0M1552.3 871.0h0M1604.0 293.2h0M1604.0 321.6h0M1604.0 331.1h0M1604.0 340.5h0M1604.0 350.0h0M1604.0 444.7h0M1604.0 454.2h0M1604.0 463.7h0M1604.0 473.1h0M1604.0 482.6h0M1604.0 700.5h0M1604.0 833.1h0M1604.0 842.6h0M1604.0 852.0h0M1655.7 274.2h0M1655.7 321.6h0M1655.7 766.8h0M1707.4 293.2h0M1707.4 463.7h0M1707.4 473.1h0M1707.4 511.0h0M1707.4 530.0h0M1707.4 691.0h0M1707.4 766.8h0M1707.4 814.1h0M1759.1 473.1h0M1759.1 492.1h0M1759.1 520.5h0M1759.1 615.2h0M1759.1 700.5h0M1759.1 747.8h0M1810.9 530.0h0M1810.9 615.2h0"/><path stroke="#ff8762" stroke-width="4" d="M1138.5 596.3h0M1138.5 709.9h0M1138.5 776.3h0M1190.2 444.7h0M1190.2 501.6h0M1190.2 511.0h0M1190.2 520.5h0M1190.2 605.8h0M1190.2 681.5h0M1190.2 738.4h0M1241.9 264.8h0M1241.9 501.6h0M1241.9 662.6h0M1241.9 795.2h0M1241.9 804.7h0M1293.7 312.1h0M1293.7 378.4h0M1293.7 387.9h0M1293.7 558.4h0M1293.7 653.1h0M1293.7 880.4h0M1293.7 889.9h0M1345.4 293.2h0M1345.4 558.4h0M1345.4 747.8h0M1345.4 757.3h0M1345.4 766.8h0M1345.4 776.3h0M1345.4 785.7h0M1345.4 795.2h0M1345.4 804.7h0M1345.4 823.6h0M1345.4 908.9h0M1397.1 283.7h0M1397.1 624.7h0M1448.8 274.2h0M1448.8 321.6h0M1448.8 340.5h0M1448.8 378.4h0M1448.8 444.7h0M1448.8 492.1h0M1448.8 501.6h0M1448.8 852.0h0M1448.8 861.5h0M1448.8 871.0h0M1500.5 312.1h0M1500.5 406.8h0M1500.5 586.8h0M1500.5 719.4h0M1552.3 293.2h0M1552.3 634.2h0M1552.3 672.1h0M1552.3 700.5h0M1552.3 871.0h0M1604.0 293.2h0M1604.0 321.6h0M1604.0 331.1h0M1604.0 340.5h0M1604.0 350.0h0M1604.0 444.7h0M1604.0 454.2h0M1604.0 463.7h0M1604.0 473.1h0M1604.0 482.6h0M1604.0 700.5h0M1604.0 833.1h0M1604.0 842.6h0M1604.0 852.0h0M1655.7 274.2h0M1655.7 321.6h0M1655.7 766.8h0M1707.4 293.2h0M1707.4 463.7h0M1707.4 473.1h0M1707.4 511.0h0M1707.4 530.0h0M1707.4 691.0h0M1707.4 766.8h0M1707.4 814.1h0M1759.1 473.1h0M1759.1 492.1h0M1759.1 520.5h0M1759.1 615.2h0M1759.1 700.5h0M1759.1 747.8h0M1810.9 530.0h0M1810.9 615.2h0"/><path stroke="#ff5c76" stroke-opacity="0.32" stroke-width="5.900" d="M1138.5 236.3h0M1138.5 245.8h0M1138.5 255.3h0M1138.5 264.8h0M1138.5 274.2h0M1138.5 283.7h0M1138.5 293.2h0M1138.5 302.7h0M1138.5 312.1h0M1138.5 321.6h0M1138.5 331.1h0M1138.5 340.5h0M1138.5 350.0h0M1138.5 359.5h0M1138.5 369.0h0M1138.5 378.4h0M1138.5 387.9h0M1138.5 397.4h0M1138.5 406.8h0M1138.5 416.3h0M1138.5 425.8h0M1138.5 435.3h0M1138.5 444.7h0M1138.5 454.2h0M1138.5 463.7h0M1138.5 473.1h0M1138.5 482.6h0M1138.5 492.1h0M1138.5 501.6h0M1138.5 511.0h0M1138.5 520.5h0M1138.5 530.0h0M1138.5 539.5h0M1138.5 548.9h0M1138.5 558.4h0M1138.5 567.9h0M1138.5 577.3h0M1138.5 586.8h0M1138.5 672.1h0M1138.5 681.5h0M1138.5 691.0h0M1138.5 700.5h0M1138.5 785.7h0M1138.5 795.2h0M1138.5 804.7h0M1138.5 814.1h0M1138.5 823.6h0M1138.5 833.1h0M1138.5 842.6h0M1138.5 852.0h0M1138.5 861.5h0M1138.5 871.0h0M1138.5 880.4h0M1138.5 889.9h0M1138.5 899.4h0M1138.5 908.9h0M1190.2 236.3h0M1190.2 245.8h0M1190.2 255.3h0M1190.2 264.8h0M1190.2 274.2h0M1190.2 283.7h0M1190.2 293.2h0M1190.2 302.7h0M1190.2 312.1h0M1190.2 321.6h0M1190.2 331.1h0M1190.2 340.5h0M1190.2 350.0h0M1190.2 359.5h0M1190.2 369.0h0M1190.2 378.4h0M1190.2 387.9h0M1190.2 397.4h0M1190.2 406.8h0M1190.2 416.3h0M1190.2 425.8h0M1190.2 435.3h0M1190.2 473.1h0M1190.2 482.6h0M1190.2 492.1h0M1190.2 530.0h0M1190.2 539.5h0M1190.2 548.9h0M1190.2 558.4h0M1190.2 567.9h0M1190.2 577.3h0M1190.2 586.8h0M1190.2 596.3h0M1190.2 691.0h0M1190.2 700.5h0M1190.2 709.9h0M1190.2 719.4h0M1190.2 728.9h0M1190.2 814.1h0M1190.2 823.6h0M1190.2 833.1h0M1190.2 842.6h0M1190.2 852.0h0M1190.2 861.5h0M1190.2 871.0h0M1190.2 880.4h0M1190.2 889.9h0M1190.2 899.4h0M1190.2 908.9h0M1241.9 274.2h0M1241.9 283.7h0M1241.9 293.2h0M1241.9 302.7h0M1241.9 511.0h0M1241.9 520.5h0M1241.9 530.0h0M1241.9 539.5h0M1241.9 548.9h0M1241.9 558.4h0M1241.9 567.9h0M1241.9 577.3h0M1241.9 586.8h0M1241.9 596.3h0M1241.9 605.8h0M1241.9 615.2h0M1241.9 624.7h0M1241.9 634.2h0M1241.9 643.6h0M1241.9 653.1h0M1241.9 814.1h0M1241.9 823.6h0M1241.9 833.1h0M1241.9 842.6h0M1241.9 852.0h0M1241.9 861.5h0M1241.9 871.0h0M1241.9 880.4h0M1241.9 889.9h0M1241.9 899.4h0M1241.9 908.9h0M1293.7 245.8h0M1293.7 255.3h0M1293.7 264.8h0M1293.7 274.2h0M1293.7 283.7h0M1293.7 293.2h0M1293.7 302.7h0M1293.7 567.9h0M1293.7 577.3h0M1293.7 586.8h0M1293.7 596.3h0M1293.7 605.8h0M1293.7 615.2h0M1293.7 624.7h0M1293.7 634.2h0M1293.7 643.6h0M1293.7 899.4h0M1293.7 908.9h0M1345.4 236.3h0M1345.4 245.8h0M1345.4 255.3h0M1345.4 264.8h0M1345.4 274.2h0M1345.4 283.7h0M1345.4 567.9h0M1345.4 577.3h0M1345.4 586.8h0M1345.4 596.3h0M1345.4 605.8h0M1345.4 615.2h0M1345.4 624.7h0M1345.4 634.2h0M1345.4 643.6h0M1345.4 653.1h0M1345.4 662.6h0M1345.4 672.1h0M1345.4 681.5h0M1345.4 691.0h0M1345.4 700.5h0M1345.4 814.1h0M1345.4 861.5h0M1345.4 871.0h0M1345.4 880.4h0M1345.4 889.9h0M1345.4 899.4h0M1397.1 236.3h0M1397.1 245.8h0M1397.1 255.3h0M1397.1 264.8h0M1397.1 274.2h0M1397.1 473.1h0M1397.1 482.6h0M1397.1 492.1h0M1397.1 501.6h0M1397.1 511.0h0M1397.1 520.5h0M1397.1 530.0h0M1397.1 539.5h0M1397.1 548.9h0M1397.1 558.4h0M1397.1 567.9h0M1397.1 577.3h0M1397.1 586.8h0M1397.1 596.3h0M1397.1 605.8h0M1397.1 615.2h0M1397.1 653.1h0M1397.1 662.6h0M1397.1 672.1h0M1397.1 681.5h0M1397.1 691.0h0M1397.1 700.5h0M1397.1 709.9h0M1397.1 719.4h0M1397.1 728.9h0M1397.1 738.4h0M1397.1 747.8h0M1397.1 757.3h0M1397.1 766.8h0M1397.1 776.3h0M1397.1 785.7h0M1397.1 795.2h0M1397.1 804.7h0M1397.1 814.1h0M1397.1 823.6h0M1397.1 833.1h0M1397.1 842.6h0M1397.1 852.0h0M1397.1 861.5h0M1397.1 871.0h0M1397.1 880.4h0M1397.1 889.9h0M1397.1 899.4h0M1397.1 908.9h0M1448.8 236.3h0M1448.8 245.8h0M1448.8 255.3h0M1448.8 264.8h0M1448.8 331.1h0M1448.8 387.9h0M1448.8 397.4h0M1448.8 406.8h0M1448.8 416.3h0M1448.8 425.8h0M1448.8 435.3h0M1448.8 454.2h0M1448.8 463.7h0M1448.8 473.1h0M1448.8 482.6h0M1448.8 511.0h0M1448.8 520.5h0M1448.8 530.0h0M1448.8 539.5h0M1448.8 548.9h0M1448.8 558.4h0M1448.8 567.9h0M1448.8 577.3h0M1448.8 719.4h0M1448.8 728.9h0M1448.8 738.4h0M1448.8 747.8h0M1448.8 757.3h0M1448.8 766.8h0M1448.8 776.3h0M1448.8 785.7h0M1448.8 795.2h0M1448.8 804.7h0M1448.8 814.1h0M1448.8 823.6h0M1448.8 833.1h0M1448.8 842.6h0M1448.8 899.4h0M1448.8 908.9h0M1500.5 321.6h0M1500.5 331.1h0M1500.5 340.5h0M1500.5 350.0h0M1500.5 416.3h0M1500.5 425.8h0M1500.5 435.3h0M1500.5 444.7h0M1500.5 454.2h0M1500.5 463.7h0M1500.5 473.1h0M1500.5 482.6h0M1500.5 492.1h0M1500.5 501.6h0M1500.5 511.0h0M1500.5 520.5h0M1500.5 530.0h0M1500.5 539.5h0M1500.5 548.9h0M1500.5 558.4h0M1500.5 567.9h0M1500.5 577.3h0M1500.5 728.9h0M1500.5 738.4h0M1500.5 747.8h0M1500.5 757.3h0M1500.5 766.8h0M1500.5 776.3h0M1500.5 785.7h0M1500.5 795.2h0M1500.5 804.7h0M1500.5 814.1h0M1500.5 823.6h0M1500.5 833.1h0M1500.5 842.6h0M1500.5 852.0h0M1500.5 861.5h0M1500.5 871.0h0M1500.5 880.4h0M1500.5 889.9h0M1500.5 899.4h0M1500.5 908.9h0M1552.3 302.7h0M1552.3 312.1h0M1552.3 321.6h0M1552.3 331.1h0M1552.3 340.5h0M1552.3 350.0h0M1552.3 454.2h0M1552.3 463.7h0M1552.3 473.1h0M1552.3 482.6h0M1552.3 596.3h0M1552.3 605.8h0M1552.3 615.2h0M1552.3 624.7h0M1552.3 681.5h0M1552.3 691.0h0M1604.0 302.7h0M1604.0 312.1h0M1604.0 492.1h0M1604.0 501.6h0M1604.0 511.0h0M1604.0 520.5h0M1604.0 530.0h0M1604.0 539.5h0M1604.0 548.9h0M1604.0 558.4h0M1604.0 567.9h0M1604.0 577.3h0M1604.0 586.8h0M1604.0 596.3h0M1604.0 605.8h0M1604.0 615.2h0M1604.0 624.7h0M1604.0 634.2h0M1604.0 643.6h0M1604.0 653.1h0M1604.0 662.6h0M1604.0 672.1h0M1604.0 681.5h0M1604.0 691.0h0M1655.7 283.7h0M1655.7 293.2h0M1655.7 302.7h0M1655.7 312.1h0M1655.7 416.3h0M1655.7 425.8h0M1655.7 435.3h0M1655.7 444.7h0M1655.7 454.2h0M1655.7 463.7h0M1655.7 473.1h0M1655.7 482.6h0M1655.7 492.1h0M1655.7 501.6h0M1655.7 511.0h0M1655.7 520.5h0M1655.7 530.0h0M1655.7 539.5h0M1655.7 548.9h0M1655.7 558.4h0M1655.7 567.9h0M1655.7 577.3h0M1655.7 586.8h0M1655.7 596.3h0M1655.7 605.8h0M1655.7 615.2h0M1655.7 624.7h0M1655.7 634.2h0M1655.7 643.6h0M1655.7 653.1h0M1655.7 662.6h0M1655.7 672.1h0M1655.7 681.5h0M1655.7 691.0h0M1655.7 700.5h0M1655.7 709.9h0M1655.7 719.4h0M1655.7 728.9h0M1655.7 738.4h0M1655.7 747.8h0M1655.7 757.3h0M1655.7 814.1h0M1655.7 823.6h0M1655.7 833.1h0M1655.7 842.6h0M1655.7 852.0h0M1655.7 861.5h0M1655.7 871.0h0M1655.7 880.4h0M1655.7 889.9h0M1655.7 899.4h0M1655.7 908.9h0M1707.4 444.7h0M1707.4 454.2h0M1707.4 482.6h0M1707.4 492.1h0M1707.4 501.6h0M1707.4 539.5h0M1707.4 548.9h0M1707.4 558.4h0M1707.4 567.9h0M1707.4 577.3h0M1707.4 586.8h0M1707.4 596.3h0M1707.4 605.8h0M1707.4 615.2h0M1707.4 624.7h0M1707.4 634.2h0M1707.4 643.6h0M1707.4 653.1h0M1707.4 662.6h0M1707.4 672.1h0M1707.4 681.5h0M1707.4 776.3h0M1707.4 785.7h0M1707.4 795.2h0M1707.4 804.7h0M1707.4 823.6h0M1707.4 833.1h0M1707.4 842.6h0M1707.4 852.0h0M1707.4 861.5h0M1707.4 871.0h0M1707.4 880.4h0M1707.4 889.9h0M1707.4 899.4h0M1707.4 908.9h0M1759.1 283.7h0M1759.1 293.2h0M1759.1 302.7h0M1759.1 312.1h0M1759.1 321.6h0M1759.1 331.1h0M1759.1 482.6h0M1759.1 530.0h0M1759.1 539.5h0M1759.1 548.9h0M1759.1 558.4h0M1759.1 567.9h0M1759.1 577.3h0M1759.1 586.8h0M1759.1 596.3h0M1759.1 605.8h0M1759.1 681.5h0M1759.1 691.0h0M1759.1 757.3h0M1759.1 766.8h0M1759.1 776.3h0M1759.1 785.7h0M1759.1 795.2h0M1759.1 804.7h0M1759.1 814.1h0M1759.1 823.6h0M1759.1 833.1h0M1759.1 842.6h0M1759.1 852.0h0M1759.1 861.5h0M1759.1 871.0h0M1759.1 880.4h0M1759.1 889.9h0M1759.1 899.4h0M1759.1 908.9h0M1810.9 236.3h0M1810.9 245.8h0M1810.9 255.3h0M1810.9 264.8h0M1810.9 274.2h0M1810.9 283.7h0M1810.9 293.2h0M1810.9 302.7h0M1810.9 312.1h0M1810.9 321.6h0M1810.9 331.1h0M1810.9 340.5h0M1810.9 350.0h0M1810.9 359.5h0M1810.9 369.0h0M1810.9 539.5h0M1810.9 548.9h0M1810.9 558.4h0M1810.9 567.9h0M1810.9 577.3h0M1810.9 586.8h0M1810.9 596.3h0M1810.9 605.8h0M1810.9 757.3h0M1810.9 766.8h0M1810.9 776.3h0M1810.9 785.7h0M1810.9 795.2h0M1810.9 804.7h0M1810.9 814.1h0M1810.9 823.6h0M1810.9 833.1h0M1810.9 842.6h0M1810.9 852.0h0M1810.9 861.5h0M1810.9 871.0h0M1810.9 880.4h0M1810.9 889.9h0M1810.9 899.4h0M1810.9 908.9h0"/><path stroke="#ff5c76" stroke-width="4" d="M1138.5 236.3h0M1138.5 245.8h0M1138.5 255.3h0M1138.5 264.8h0M1138.5 274.2h0M1138.5 283.7h0M1138.5 293.2h0M1138.5 302.7h0M1138.5 312.1h0M1138.5 321.6h0M1138.5 331.1h0M1138.5 340.5h0M1138.5 350.0h0M1138.5 359.5h0M1138.5 369.0h0M1138.5 378.4h0M1138.5 387.9h0M1138.5 397.4h0M1138.5 406.8h0M1138.5 416.3h0M1138.5 425.8h0M1138.5 435.3h0M1138.5 444.7h0M1138.5 454.2h0M1138.5 463.7h0M1138.5 473.1h0M1138.5 482.6h0M1138.5 492.1h0M1138.5 501.6h0M1138.5 511.0h0M1138.5 520.5h0M1138.5 530.0h0M1138.5 539.5h0M1138.5 548.9h0M1138.5 558.4h0M1138.5 567.9h0M1138.5 577.3h0M1138.5 586.8h0M1138.5 672.1h0M1138.5 681.5h0M1138.5 691.0h0M1138.5 700.5h0M1138.5 785.7h0M1138.5 795.2h0M1138.5 804.7h0M1138.5 814.1h0M1138.5 823.6h0M1138.5 833.1h0M1138.5 842.6h0M1138.5 852.0h0M1138.5 861.5h0M1138.5 871.0h0M1138.5 880.4h0M1138.5 889.9h0M1138.5 899.4h0M1138.5 908.9h0M1190.2 236.3h0M1190.2 245.8h0M1190.2 255.3h0M1190.2 264.8h0M1190.2 274.2h0M1190.2 283.7h0M1190.2 293.2h0M1190.2 302.7h0M1190.2 312.1h0M1190.2 321.6h0M1190.2 331.1h0M1190.2 340.5h0M1190.2 350.0h0M1190.2 359.5h0M1190.2 369.0h0M1190.2 378.4h0M1190.2 387.9h0M1190.2 397.4h0M1190.2 406.8h0M1190.2 416.3h0M1190.2 425.8h0M1190.2 435.3h0M1190.2 473.1h0M1190.2 482.6h0M1190.2 492.1h0M1190.2 530.0h0M1190.2 539.5h0M1190.2 548.9h0M1190.2 558.4h0M1190.2 567.9h0M1190.2 577.3h0M1190.2 586.8h0M1190.2 596.3h0M1190.2 691.0h0M1190.2 700.5h0M1190.2 709.9h0M1190.2 719.4h0M1190.2 728.9h0M1190.2 814.1h0M1190.2 823.6h0M1190.2 833.1h0M1190.2 842.6h0M1190.2 852.0h0M1190.2 861.5h0M1190.2 871.0h0M1190.2 880.4h0M1190.2 889.9h0M1190.2 899.4h0M1190.2 908.9h0M1241.9 274.2h0M1241.9 283.7h0M1241.9 293.2h0M1241.9 302.7h0M1241.9 511.0h0M1241.9 520.5h0M1241.9 530.0h0M1241.9 539.5h0M1241.9 548.9h0M1241.9 558.4h0M1241.9 567.9h0M1241.9 577.3h0M1241.9 586.8h0M1241.9 596.3h0M1241.9 605.8h0M1241.9 615.2h0M1241.9 624.7h0M1241.9 634.2h0M1241.9 643.6h0M1241.9 653.1h0M1241.9 814.1h0M1241.9 823.6h0M1241.9 833.1h0M1241.9 842.6h0M1241.9 852.0h0M1241.9 861.5h0M1241.9 871.0h0M1241.9 880.4h0M1241.9 889.9h0M1241.9 899.4h0M1241.9 908.9h0M1293.7 245.8h0M1293.7 255.3h0M1293.7 264.8h0M1293.7 274.2h0M1293.7 283.7h0M1293.7 293.2h0M1293.7 302.7h0M1293.7 567.9h0M1293.7 577.3h0M1293.7 586.8h0M1293.7 596.3h0M1293.7 605.8h0M1293.7 615.2h0M1293.7 624.7h0M1293.7 634.2h0M1293.7 643.6h0M1293.7 899.4h0M1293.7 908.9h0M1345.4 236.3h0M1345.4 245.8h0M1345.4 255.3h0M1345.4 264.8h0M1345.4 274.2h0M1345.4 283.7h0M1345.4 567.9h0M1345.4 577.3h0M1345.4 586.8h0M1345.4 596.3h0M1345.4 605.8h0M1345.4 615.2h0M1345.4 624.7h0M1345.4 634.2h0M1345.4 643.6h0M1345.4 653.1h0M1345.4 662.6h0M1345.4 672.1h0M1345.4 681.5h0M1345.4 691.0h0M1345.4 700.5h0M1345.4 814.1h0M1345.4 861.5h0M1345.4 871.0h0M1345.4 880.4h0M1345.4 889.9h0M1345.4 899.4h0M1397.1 236.3h0M1397.1 245.8h0M1397.1 255.3h0M1397.1 264.8h0M1397.1 274.2h0M1397.1 473.1h0M1397.1 482.6h0M1397.1 492.1h0M1397.1 501.6h0M1397.1 511.0h0M1397.1 520.5h0M1397.1 530.0h0M1397.1 539.5h0M1397.1 548.9h0M1397.1 558.4h0M1397.1 567.9h0M1397.1 577.3h0M1397.1 586.8h0M1397.1 596.3h0M1397.1 605.8h0M1397.1 615.2h0M1397.1 653.1h0M1397.1 662.6h0M1397.1 672.1h0M1397.1 681.5h0M1397.1 691.0h0M1397.1 700.5h0M1397.1 709.9h0M1397.1 719.4h0M1397.1 728.9h0M1397.1 738.4h0M1397.1 747.8h0M1397.1 757.3h0M1397.1 766.8h0M1397.1 776.3h0M1397.1 785.7h0M1397.1 795.2h0M1397.1 804.7h0M1397.1 814.1h0M1397.1 823.6h0M1397.1 833.1h0M1397.1 842.6h0M1397.1 852.0h0M1397.1 861.5h0M1397.1 871.0h0M1397.1 880.4h0M1397.1 889.9h0M1397.1 899.4h0M1397.1 908.9h0M1448.8 236.3h0M1448.8 245.8h0M1448.8 255.3h0M1448.8 264.8h0M1448.8 331.1h0M1448.8 387.9h0M1448.8 397.4h0M1448.8 406.8h0M1448.8 416.3h0M1448.8 425.8h0M1448.8 435.3h0M1448.8 454.2h0M1448.8 463.7h0M1448.8 473.1h0M1448.8 482.6h0M1448.8 511.0h0M1448.8 520.5h0M1448.8 530.0h0M1448.8 539.5h0M1448.8 548.9h0M1448.8 558.4h0M1448.8 567.9h0M1448.8 577.3h0M1448.8 719.4h0M1448.8 728.9h0M1448.8 738.4h0M1448.8 747.8h0M1448.8 757.3h0M1448.8 766.8h0M1448.8 776.3h0M1448.8 785.7h0M1448.8 795.2h0M1448.8 804.7h0M1448.8 814.1h0M1448.8 823.6h0M1448.8 833.1h0M1448.8 842.6h0M1448.8 899.4h0M1448.8 908.9h0M1500.5 321.6h0M1500.5 331.1h0M1500.5 340.5h0M1500.5 350.0h0M1500.5 416.3h0M1500.5 425.8h0M1500.5 435.3h0M1500.5 444.7h0M1500.5 454.2h0M1500.5 463.7h0M1500.5 473.1h0M1500.5 482.6h0M1500.5 492.1h0M1500.5 501.6h0M1500.5 511.0h0M1500.5 520.5h0M1500.5 530.0h0M1500.5 539.5h0M1500.5 548.9h0M1500.5 558.4h0M1500.5 567.9h0M1500.5 577.3h0M1500.5 728.9h0M1500.5 738.4h0M1500.5 747.8h0M1500.5 757.3h0M1500.5 766.8h0M1500.5 776.3h0M1500.5 785.7h0M1500.5 795.2h0M1500.5 804.7h0M1500.5 814.1h0M1500.5 823.6h0M1500.5 833.1h0M1500.5 842.6h0M1500.5 852.0h0M1500.5 861.5h0M1500.5 871.0h0M1500.5 880.4h0M1500.5 889.9h0M1500.5 899.4h0M1500.5 908.9h0M1552.3 302.7h0M1552.3 312.1h0M1552.3 321.6h0M1552.3 331.1h0M1552.3 340.5h0M1552.3 350.0h0M1552.3 454.2h0M1552.3 463.7h0M1552.3 473.1h0M1552.3 482.6h0M1552.3 596.3h0M1552.3 605.8h0M1552.3 615.2h0M1552.3 624.7h0M1552.3 681.5h0M1552.3 691.0h0M1604.0 302.7h0M1604.0 312.1h0M1604.0 492.1h0M1604.0 501.6h0M1604.0 511.0h0M1604.0 520.5h0M1604.0 530.0h0M1604.0 539.5h0M1604.0 548.9h0M1604.0 558.4h0M1604.0 567.9h0M1604.0 577.3h0M1604.0 586.8h0M1604.0 596.3h0M1604.0 605.8h0M1604.0 615.2h0M1604.0 624.7h0M1604.0 634.2h0M1604.0 643.6h0M1604.0 653.1h0M1604.0 662.6h0M1604.0 672.1h0M1604.0 681.5h0M1604.0 691.0h0M1655.7 283.7h0M1655.7 293.2h0M1655.7 302.7h0M1655.7 312.1h0M1655.7 416.3h0M1655.7 425.8h0M1655.7 435.3h0M1655.7 444.7h0M1655.7 454.2h0M1655.7 463.7h0M1655.7 473.1h0M1655.7 482.6h0M1655.7 492.1h0M1655.7 501.6h0M1655.7 511.0h0M1655.7 520.5h0M1655.7 530.0h0M1655.7 539.5h0M1655.7 548.9h0M1655.7 558.4h0M1655.7 567.9h0M1655.7 577.3h0M1655.7 586.8h0M1655.7 596.3h0M1655.7 605.8h0M1655.7 615.2h0M1655.7 624.7h0M1655.7 634.2h0M1655.7 643.6h0M1655.7 653.1h0M1655.7 662.6h0M1655.7 672.1h0M1655.7 681.5h0M1655.7 691.0h0M1655.7 700.5h0M1655.7 709.9h0M1655.7 719.4h0M1655.7 728.9h0M1655.7 738.4h0M1655.7 747.8h0M1655.7 757.3h0M1655.7 814.1h0M1655.7 823.6h0M1655.7 833.1h0M1655.7 842.6h0M1655.7 852.0h0M1655.7 861.5h0M1655.7 871.0h0M1655.7 880.4h0M1655.7 889.9h0M1655.7 899.4h0M1655.7 908.9h0M1707.4 444.7h0M1707.4 454.2h0M1707.4 482.6h0M1707.4 492.1h0M1707.4 501.6h0M1707.4 539.5h0M1707.4 548.9h0M1707.4 558.4h0M1707.4 567.9h0M1707.4 577.3h0M1707.4 586.8h0M1707.4 596.3h0M1707.4 605.8h0M1707.4 615.2h0M1707.4 624.7h0M1707.4 634.2h0M1707.4 643.6h0M1707.4 653.1h0M1707.4 662.6h0M1707.4 672.1h0M1707.4 681.5h0M1707.4 776.3h0M1707.4 785.7h0M1707.4 795.2h0M1707.4 804.7h0M1707.4 823.6h0M1707.4 833.1h0M1707.4 842.6h0M1707.4 852.0h0M1707.4 861.5h0M1707.4 871.0h0M1707.4 880.4h0M1707.4 889.9h0M1707.4 899.4h0M1707.4 908.9h0M1759.1 283.7h0M1759.1 293.2h0M1759.1 302.7h0M1759.1 312.1h0M1759.1 321.6h0M1759.1 331.1h0M1759.1 482.6h0M1759.1 530.0h0M1759.1 539.5h0M1759.1 548.9h0M1759.1 558.4h0M1759.1 567.9h0M1759.1 577.3h0M1759.1 586.8h0M1759.1 596.3h0M1759.1 605.8h0M1759.1 681.5h0M1759.1 691.0h0M1759.1 757.3h0M1759.1 766.8h0M1759.1 776.3h0M1759.1 785.7h0M1759.1 795.2h0M1759.1 804.7h0M1759.1 814.1h0M1759.1 823.6h0M1759.1 833.1h0M1759.1 842.6h0M1759.1 852.0h0M1759.1 861.5h0M1759.1 871.0h0M1759.1 880.4h0M1759.1 889.9h0M1759.1 899.4h0M1759.1 908.9h0M1810.9 236.3h0M1810.9 245.8h0M1810.9 255.3h0M1810.9 264.8h0M1810.9 274.2h0M1810.9 283.7h0M1810.9 293.2h0M1810.9 302.7h0M1810.9 312.1h0M1810.9 321.6h0M1810.9 331.1h0M1810.9 340.5h0M1810.9 350.0h0M1810.9 359.5h0M1810.9 369.0h0M1810.9 539.5h0M1810.9 548.9h0M1810.9 558.4h0M1810.9 567.9h0M1810.9 577.3h0M1810.9 586.8h0M1810.9 596.3h0M1810.9 605.8h0M1810.9 757.3h0M1810.9 766.8h0M1810.9 776.3h0M1810.9 785.7h0M1810.9 795.2h0M1810.9 804.7h0M1810.9 814.1h0M1810.9 823.6h0M1810.9 833.1h0M1810.9 842.6h0M1810.9 852.0h0M1810.9 861.5h0M1810.9 871.0h0M1810.9 880.4h0M1810.9 889.9h0M1810.9 899.4h0M1810.9 908.9h0"/></g></svg>
<div class="a" style="left:356px;top:1052.500px;width:15.500px;height:15.500px;background:#3c3c3c;border:1px solid #6a6a6a"></div><div class="a" style="left:376px;top:1052px;width:16.500px;height:16.500px;background:#b4b4b4"></div><svg style="left:244px;top:1050px" width="156" height="21" viewBox="244 1050 156 21" fill="none"><path d="M253.400 1054.500h3.300v4.100h4.300v3.300h-4.300v4.100h-3.300v-4.100h-4.300v-3.300h4.300z" fill="#dcdcdc"/><path d="M253.400 1054.500h1.200v11.500h-1.200zM249.100 1058.600h11.900v1.100h-11.900z" fill="#f4f4f4"/><path d="M266.800 1065.300v-5.700l5.400-3.900 5.600 3.900v5.700z" fill="#777" stroke="#111" stroke-width="0.900"/><path d="M267.300 1059.800l4.900-3.500 5 3.500-4.500 1.200v4h-5.400z" fill="#e6e6e6"/><circle cx="269.200" cy="1061.600" r="0.900" fill="#123"/><path d="M284.700 1061.400l10.300-4.400M284.700 1061.400l10.300 4.200" stroke="#1c1c1c" stroke-width="0.800"/><circle cx="284.600" cy="1061.400" r="1" fill="#999" stroke="#222" stroke-width="0.500"/><circle cx="295.200" cy="1057" r="0.800" fill="#111"/><circle cx="295.200" cy="1065.700" r="0.800" fill="#111"/><path d="M303.500 1063.400h13v1.700h-13z" fill="#666"/><path d="M305.800 1056.500h6.600l2.600 6.200h-11.700z" fill="#e8e8e8"/><path d="M304.900 1058.600h8.400M304.100 1060.700h10M308 1056.500l-1.200 6.200M310.300 1056.500l0.900 6.200" stroke="#333" stroke-width="0.600"/><path d="M305.500 1056.200h7" stroke="#222" stroke-width="0.800"/><path d="M301.800 1057.500v6h6" stroke="#f00000" stroke-width="1.100"/><path d="M320.800 1058l3-3h7.700v8l-3 3h-7.700z" fill="#999" stroke="#111" stroke-width="0.900"/><path d="M321 1057.900l2.900-2.700h7.200l-2.700 2.700z" fill="#f2f2f2"/><path d="M328.500 1058v7.800M328.500 1058l2.800-2.800" stroke="#111" stroke-width="0.700"/><path d="M328.900 1058.200l2.300-2.300v7l-2.300 2.400z" fill="#777"/><path d="M343.400 1055.600h2.600v2.200h-2.600zM343.400 1058.700h2.600v6.900h-2.600z" fill="#c8c8c8"/><path d="M360.300 1057.600h7.200l-3.600 6.500z" fill="#000"/><path d="M377.500 1058.200h3l1-1.200h3.400l1 1.200h5.600v8h-14z" fill="#484848"/><path d="M388.800 1056.900h2.700v1.600h-2.700z" fill="#000"/><circle cx="384.300" cy="1062.300" r="2.900" fill="#e6e6e6" stroke="#000" stroke-width="0.800"/></svg><span class="t" style="left:397.500px;top:1054.500px;color:#b6b6b6;font-size:9.300px">Background TOP:</span><div class="f" style="left:482px;top:1053px;width:150px;height:15px"></div><span class="t" style="left:635.500px;top:1054.500px;color:#b6b6b6;font-size:9.300px">Scale:</span><div class="f" style="left:667px;top:1053px;width:24px;height:15px"><span class="t" style="left:2px;top:1.500px;color:#666;font-size:9.300px">1</span></div><svg style="left:694px;top:1052px" width="14" height="17" viewBox="0 0 14 17"><path d="M7 1.500l1.500 1.800-1.500 1.800-1.500-1.800z" fill="#111"/><path d="M1.500 14.800h11" stroke="#d0d0d0" stroke-width="1.100"/><path d="M2 14h10" stroke="#555" stroke-width="0.600"/></svg>
<div class="a" style="left:0;top:1070px;width:2000px;height:55px;background:#303136;border-top:1px solid #4a4a4f;border-bottom:1px solid #4a4b50"></div><div class="a" style="left:1px;top:1071px;width:216px;height:53px;background:#0c0a17"></div><div class="a" style="left:217px;top:1071px;width:1px;height:53px;background:#4a4a50"></div><span class="t lbl" style="left:4.500px;top:1075px;font-size:10px">Start:</span><span class="t val" style="left:52px;top:1075px;font-size:9.900px">1</span><span class="t lbl" style="left:106px;top:1075px;font-size:10px">End:</span><span class="t val" style="left:153px;top:1075px;font-size:9.900px">36397</span><span class="t lbl" style="left:4.500px;top:1087px;font-size:10px">RStart:</span><span class="t val" style="left:52px;top:1087px;font-size:9.900px">1</span><span class="t lbl" style="left:106px;top:1087px;font-size:10px">REnd:</span><span class="t val" style="left:153px;top:1087px;font-size:9.900px">36397</span><span class="t lbl" style="left:4.500px;top:1098.6px;font-size:10px">FPS:</span><span class="t val" style="left:52px;top:1098.6px;font-size:9.900px">30.0</span><span class="t lbl" style="left:106px;top:1098.6px;font-size:10px">Tempo:</span><span class="t val" style="left:153px;top:1098.6px;font-size:9.900px">120.0</span><span class="t lbl" style="left:4.500px;top:1110.6px;font-size:10px">ResetF:</span><span class="t val" style="left:52px;top:1110.6px;font-size:9.900px">1</span><span class="t lbl" style="left:106px;top:1110.6px;font-size:10px">T Sig:</span><span class="t val" style="left:153px;top:1110.6px;font-size:9.900px">4</span><span class="t val" style="left:180.500px;top:1110.600px;font-size:9.900px">4</span><div class="a" style="left:218px;top:1071px;width:1781px;height:11px;background:#0e0e0e;border-bottom:1px solid #3c3c3c"></div><span class="t" style="left:219.500px;top:1069.500px;font-size:8.600px;color:#8e8e8e">1</span><div class="a" style="left:314.1px;top:1071px;width:1px;height:10px;background:#4a4a4a"></div><span class="t" style="left:315.9px;top:1069.500px;font-size:8.600px;color:#8e8e8e">2001</span><div class="a" style="left:412.0px;top:1071px;width:1px;height:10px;background:#4a4a4a"></div><span class="t" style="left:413.8px;top:1069.500px;font-size:8.600px;color:#8e8e8e">4001</span><div class="a" style="left:510.0px;top:1071px;width:1px;height:10px;background:#4a4a4a"></div><span class="t" style="left:511.8px;top:1069.500px;font-size:8.600px;color:#8e8e8e">6001</span><div class="a" style="left:607.9px;top:1071px;width:1px;height:10px;background:#4a4a4a"></div><span class="t" style="left:609.7px;top:1069.500px;font-size:8.600px;color:#8e8e8e">8001</span><div class="a" style="left:705.9px;top:1071px;width:1px;height:10px;background:#4a4a4a"></div><span class="t" style="left:707.7px;top:1069.500px;font-size:8.600px;color:#8e8e8e">10001</span><div class="a" style="left:803.8px;top:1071px;width:1px;height:10px;background:#4a4a4a"></div><span class="t" style="left:805.6px;top:1069.500px;font-size:8.600px;color:#8e8e8e">12001</span><div class="a" style="left:901.7px;top:1071px;width:1px;height:10px;background:#4a4a4a"></div><span class="t" style="left:903.5px;top:1069.500px;font-size:8.600px;color:#8e8e8e">14001</span><div class="a" style="left:999.7px;top:1071px;width:1px;height:10px;background:#4a4a4a"></div><span class="t" style="left:1001.5px;top:1069.500px;font-size:8.600px;color:#8e8e8e">16001</span><div class="a" style="left:1097.6px;top:1071px;width:1px;height:10px;background:#4a4a4a"></div><span class="t" style="left:1099.4px;top:1069.500px;font-size:8.600px;color:#8e8e8e">18001</span><div class="a" style="left:1195.6px;top:1071px;width:1px;height:10px;background:#4a4a4a"></div><span class="t" style="left:1197.4px;top:1069.500px;font-size:8.600px;color:#8e8e8e">20001</span><div class="a" style="left:1293.5px;top:1071px;width:1px;height:10px;background:#4a4a4a"></div><span class="t" style="left:1295.3px;top:1069.500px;font-size:8.600px;color:#8e8e8e">22001</span><div class="a" style="left:1391.4px;top:1071px;width:1px;height:10px;background:#4a4a4a"></div><span class="t" style="left:1393.2px;top:1069.500px;font-size:8.600px;color:#8e8e8e">24001</span><div class="a" style="left:1489.4px;top:1071px;width:1px;height:10px;background:#4a4a4a"></div><span class="t" style="left:1491.2px;top:1069.500px;font-size:8.600px;color:#8e8e8e">26001</span><div class="a" style="left:1587.3px;top:1071px;width:1px;height:10px;background:#4a4a4a"></div><span class="t" style="left:1589.1px;top:1069.500px;font-size:8.600px;color:#8e8e8e">28001</span><div class="a" style="left:1685.3px;top:1071px;width:1px;height:10px;background:#4a4a4a"></div><span class="t" style="left:1687.1px;top:1069.500px;font-size:8.600px;color:#8e8e8e">30001</span><div class="a" style="left:1783.2px;top:1071px;width:1px;height:10px;background:#4a4a4a"></div><span class="t" style="left:1785.0px;top:1069.500px;font-size:8.600px;color:#8e8e8e">32001</span><div class="a" style="left:1881.1px;top:1071px;width:1px;height:10px;background:#4a4a4a"></div><span class="t" style="left:1882.9px;top:1069.500px;font-size:8.600px;color:#8e8e8e">34001</span><div class="a" style="left:1979px;top:1071px;width:1px;height:10px;background:#4a4a4a"></div><span class="t" style="left:1981px;top:1069.500px;font-size:8.600px;color:#8e8e8e">363</span><div class="a" style="left:1146px;top:1071px;width:2px;height:10.500px;background:#4f6aa2"></div><div class="a" style="left:218px;top:1082px;width:1781px;height:8px;background:#15151a"></div><div class="a" style="left:236px;top:1082.500px;width:1742.500px;height:7px;background:#3a4a6e"></div><div class="a" style="left:219px;top:1083px;width:16.500px;height:6px;background:#4e4e4e;border:1px solid #5e5e5e"></div><span class="t" style="left:223.5px;top:1078px;font-size:6px;color:#777;letter-spacing:0.500px">...</span><div class="a" style="left:1980px;top:1083px;width:16.500px;height:6px;background:#4e4e4e;border:1px solid #5e5e5e"></div><span class="t" style="left:1984.5px;top:1078px;font-size:6px;color:#777;letter-spacing:0.500px">...</span><div class="a" style="left:218px;top:1090px;width:1782px;height:1px;background:#4c4c4e"></div><div class="b c" style="left:220px;top:1092.500px;width:16px;height:15px;color:#6b7287;line-height:13px">/</div><div class="b c" style="left:220px;top:1107.500px;width:16px;height:15px;color:#6b7287;line-height:13px;font-family:'DejaVu Serif','Liberation Serif',serif">I</div><div class="a" style="left:238px;top:1092px;width:54px;height:15px;border:1px solid #4d5058"></div><div class="a or c" style="left:239px;top:1093px;width:52px;height:12.500px;line-height:14.500px;font-size:9.400px;overflow:hidden">Timecode</div><div class="b c" style="left:238px;top:1107px;width:54px;height:15px;line-height:14.600px;font-size:9.400px">Beats</div><div class="a" style="left:293.500px;top:1093px;width:155px;height:28.500px;background:#000"></div><span class="t" style="left:308px;top:1097.800px;font-size:20.650px;line-height:24px;height:24px;color:#6f9cea;transform:scaleY(1.02);transform-origin:0 19px">00:10:32:14</span><div class="a" style="left:451.500px;top:1093px;width:104px;height:28.500px;background:#000"></div><span class="t" style="left:472.400px;top:1097.800px;font-size:19.700px;line-height:24px;height:24px;color:#6f9cea;transform:scaleY(1.05);transform-origin:0 19px">18975</span><div class="b" style="left:558.5px;top:1092.500px;width:30px;height:29.500px"></div><svg style="left:558.5px;top:1092.500px" width="30" height="30" viewBox="0 0 30 30"><path d="M10.500 11.500v6" stroke="#a9b3cf" stroke-width="1.200"/><path d="M15.500 11.500v6L11 14.500zM20 11.500v6L15.500 14.500z" fill="#a9b3cf"/></svg><div class="b or" style="left:590.5px;top:1092.500px;width:29px;height:29.500px"></div><svg style="left:590.5px;top:1092.500px" width="30" height="30" viewBox="0 0 30 30"><path d="M13.200 11v7M16.200 11v7" stroke="#5a1410" stroke-width="1.400"/></svg><div class="b" style="left:622px;top:1092.500px;width:30px;height:29.500px"></div><svg style="left:622px;top:1092.500px" width="30" height="30" viewBox="0 0 30 30"><path d="M16.500 11.200v6.600L12 14.500z" fill="#a9b3cf"/></svg><div class="b" style="left:654px;top:1092.500px;width:30px;height:29.500px"></div><svg style="left:654px;top:1092.500px" width="30" height="30" viewBox="0 0 30 30"><path d="M13.500 11.200v6.600L18 14.500z" fill="#a9b3cf"/></svg><div class="b" style="left:686px;top:1092.500px;width:30px;height:29.500px"></div><svg style="left:686px;top:1092.500px" width="30" height="30" viewBox="0 0 30 30"><path d="M13 14.800h3.600" stroke="#a9b3cf" stroke-width="1.200"/></svg><div class="b" style="left:718px;top:1092.500px;width:30px;height:29.500px"></div><svg style="left:718px;top:1092.500px" width="30" height="30" viewBox="0 0 30 30"><path d="M11 14.800h8M15 10.800v8" stroke="#a9b3cf" stroke-width="1.200"/></svg><span class="t" style="left:760.500px;top:1094px;font-size:9.400px">Range Limit</span><div class="a" style="left:750.500px;top:1108px;width:78px;height:14.500px;border:1px solid #4d5058"></div><div class="a or c" style="left:752px;top:1109.500px;width:38.500px;height:11.500px;line-height:12.800px;font-size:9.600px;overflow:hidden">Loop</div><div class="a c" style="left:792.500px;top:1109.500px;width:34px;height:11.500px;line-height:12.800px;font-size:9.600px;background:#383b44;overflow:hidden">Once</div>
</body></html>
